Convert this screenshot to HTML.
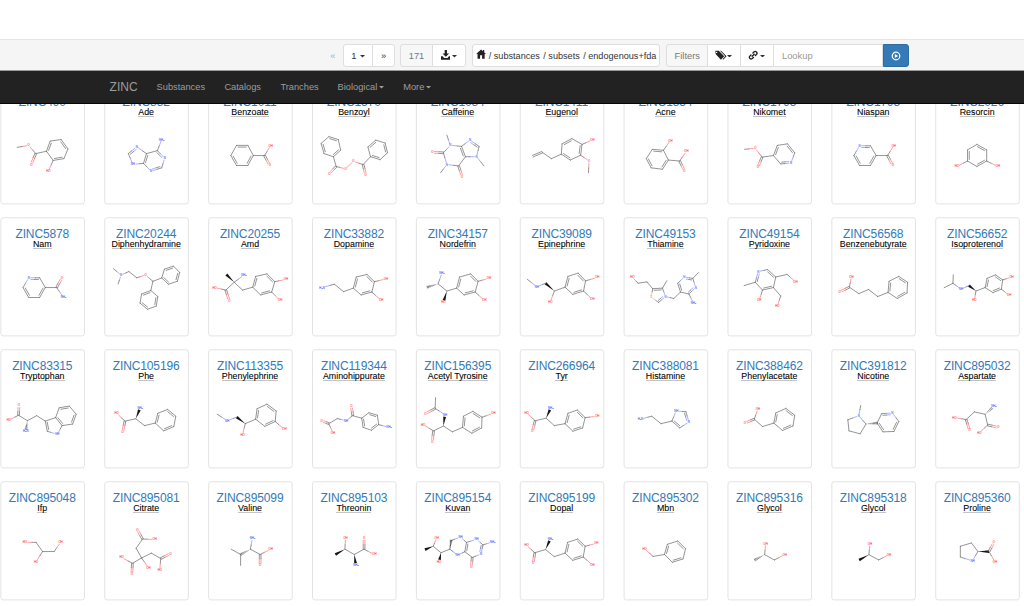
<!DOCTYPE html>
<html lang="en"><head><meta charset="utf-8"><title>ZINC</title>
<style>
*{box-sizing:border-box}
html,body{margin:0;padding:0}
body{width:1024px;height:606px;overflow:hidden;background:#fff;font-family:"Liberation Sans",sans-serif;font-size:9.33px;color:#333;position:relative}
a{color:#337ab7;text-decoration:none}
#toolbar{position:absolute;left:0;top:39px;width:1024px;height:31px;background:#f5f5f5;border-top:1px solid #e4e4e4;z-index:5}
.btn{position:absolute;top:4px;height:23px;background:#fff;border:1px solid #dedede;color:#333;font-size:9.33px;line-height:23.2px;text-align:center;white-space:nowrap;padding:0}
.btn.l{border-radius:3px 0 0 3px}
.btn.r{border-radius:0 3px 3px 0}
.btn.lr{border-radius:3px}
.btn.dis{background:#f7f7f7;color:#777}
.caret{display:inline-block;width:5px;height:2.6px;vertical-align:middle;margin-left:1.2px;position:relative;top:-0.3px}
.btn svg{position:absolute}
.btn svg.caret{position:relative}
.btn i{font-style:normal;margin-left:0.8px}
#prev{position:absolute;left:330.2px;top:5.4px;height:22.4px;line-height:22.4px;color:#8db6dc;font-size:9.33px}
#lookup{position:absolute;left:773.2px;top:4px;width:110.3px;height:23px;border:1px solid #dedede;background:#fff;color:#999;font-size:9.33px;line-height:23.2px;padding-left:7.8px;text-align:left}
#go{position:absolute;left:883px;top:4px;width:26px;height:23px;background:#337ab7;border:1px solid #2e6da4;border-radius:0 3px 3px 0}
#navbar{position:absolute;left:0;top:70px;width:1024px;height:34px;background:#222;border-top:1px solid #9a9a9a;border-bottom:1px solid #080808;z-index:4}
#navbar a{position:absolute;color:#9d9d9d;top:0;height:33px;line-height:33.4px;font-size:9.27px;white-space:nowrap}
#navbar a.brand{font-size:12px;left:109.6px;line-height:33.8px}
#navbar .caret{margin-left:1.4px;top:0.2px}
.tile{position:absolute;width:87px;height:122px}
.tile h4{margin:0;position:absolute;font-size:12px;letter-spacing:-0.12px;font-weight:normal;line-height:14px;height:14px;text-align:center;white-space:nowrap}
.tile h4 a{color:#337ab7}
.tile .nm{position:absolute;font-size:8.86px;line-height:9px;height:10px;color:#000;-webkit-text-stroke:0.08px #000;white-space:nowrap;text-align:center}
.tile .nm abbr{display:inline-block;height:8.6px;line-height:9px;border-bottom:1px solid #c4c4c4;text-decoration:none}
.tile svg{position:absolute;left:0;top:0}
</style></head>
<body>
<div id="toolbar">
<span id="prev">&laquo;</span>
<div class="btn l" style="left:343.4px;width:29.6px">1 <svg class="caret" viewBox="0 0 8 4"><path fill="currentColor" d="M0 0h8L4 4z"/></svg></div>
<div class="btn r" style="left:372px;width:23.2px">&raquo;</div>
<div class="btn l dis" style="left:400px;width:33px">171</div>
<div class="btn r" style="left:432.1px;width:33.5px"><svg style="left:7.5px;top:4.9px" width="9.6" height="9.8" viewBox="0 0 16 16"><path fill="#222" d="M6.1 0h3.8v5.6h3.6L8 11 2.5 5.6h3.6z"/><path fill="#222" d="M0 10.2h2.8l2.4 3h5.6l2.4-3H16V16H0z"/></svg><svg class="caret" style="position:absolute;left:18.8px;top:10.2px;margin:0" viewBox="0 0 8 4"><path fill="currentColor" d="M0 0h8L4 4z"/></svg></div>
<div class="btn lr" style="left:472.3px;width:187.4px;text-align:left"><svg style="left:3.2px;top:4.4px" width="10.2" height="10.2" viewBox="0 0 16 16"><path fill="#222" d="M8 0.6 0.2 8h2.2v7.2h4V10h3.2v5.2h4V8h2.2L13 5.4V1.6h-2v2z"/></svg><span style="position:absolute;left:15.4px;top:0;font-size:9.15px">/ substances <i>/ subsets</i> <i>/ endogenous+fda</i></span></div>
<div class="btn l dis" style="left:666.4px;width:41.8px">Filters</div>
<div class="btn" style="left:707.2px;width:34px"><svg style="left:6.4px;top:5px" width="12.6" height="10.2" viewBox="0 0 20 16"><path fill="#222" d="M0.6 1.2 1 6.2 9.4 15.2 14.6 10 6 1.2zM2.6 2.6a1.1 1.1 0 1 1 0 2.2 1.1 1.1 0 0 1 0-2.2z" fill-rule="evenodd"/><path fill="#222" d="M8 1.2h1.6L18.4 10 13 15.2l-.9-.9L16.2 10z"/></svg><svg class="caret" style="position:absolute;left:18.9px;top:9.9px;margin:0" viewBox="0 0 8 4"><path fill="currentColor" d="M0 0h8L4 4z"/></svg></div>
<div class="btn" style="left:740.2px;width:34.2px"><svg style="left:7.2px;top:5.4px" width="10.4" height="10.4" viewBox="0 0 16 16"><g fill="none" stroke="#222" stroke-width="2.1" stroke-linecap="round"><path d="M6.4 9.6 9.6 6.4"/><path d="M7.6 4.6 9.4 2.8a2.7 2.7 0 0 1 3.8 3.8L11.4 8.4"/><path d="M8.4 11.4 6.6 13.2a2.7 2.7 0 0 1-3.8-3.8L4.6 7.6"/></g></svg><svg class="caret" style="position:absolute;left:18.9px;top:9.9px;margin:0" viewBox="0 0 8 4"><path fill="currentColor" d="M0 0h8L4 4z"/></svg></div>
<div id="lookup">Lookup</div>
<div id="go"><svg style="position:absolute;left:6.8px;top:5.6px" width="10" height="10" viewBox="0 0 20 20"><circle cx="10" cy="10" r="7.6" fill="none" stroke="#fff" stroke-width="2.4"/><path fill="#fff" d="M7.6 5.8 14.2 10 7.6 14.2z"/></svg></div>
</div>
<div id="navbar">
<a class="brand">ZINC</a>
<a style="left:156.6px">Substances</a>
<a style="left:224.4px">Catalogs</a>
<a style="left:280.4px">Tranches</a>
<a style="left:337.6px">Biological<svg class="caret" viewBox="0 0 8 4"><path fill="currentColor" d="M0 0h8L4 4z"/></svg></a>
<a style="left:403.2px">More<svg class="caret" viewBox="0 0 8 4"><path fill="currentColor" d="M0 0h8L4 4z"/></svg></a>
</div>
<div id="grid">
<div class="tile" style="left:-1px;top:84px"><svg width="87" height="122" viewBox="0 0 870 1220"><rect x="18.9" y="17.6" width="835.8" height="1181.5" rx="24" fill="#fff" stroke="#e3e3e3" stroke-width="10.0"/><g fill="none" stroke-width="7.5" stroke-linecap="round"><path d="M512.0 570.9 L621.3 555.3" stroke="#727272"/><path d="M621.3 555.3 L689.7 649.1" stroke="#727272"/><path d="M617.2 578.5 L666.4 646.0" stroke="#727272"/><path d="M689.7 649.1 L648.7 746.7" stroke="#727272"/><path d="M648.7 746.7 L541.2 764.3" stroke="#727272"/><path d="M630.9 732.4 L553.5 745.1" stroke="#727272"/><path d="M541.2 764.3 L474.8 672.5" stroke="#727272"/><path d="M474.8 672.5 L512.0 570.9" stroke="#727272"/><path d="M496.0 664.1 L522.7 591.0" stroke="#727272"/><path d="M474.8 672.5 L367.4 695.9" stroke="#727272"/><path d="M367.4 695.9 L339.2 663.0" stroke="#727272"/><path d="M339.2 663.0 L310.9 630.0" stroke="#ff7c7c"/><path d="M276.1 617.5 L229.0 625.5" stroke="#ff7c7c"/><path d="M229.0 625.5 L181.9 633.4" stroke="#727272"/><path d="M359.6 692.7 L341.1 737.6" stroke="#727272"/><path d="M341.1 737.6 L322.7 782.5" stroke="#ff7c7c"/><path d="M375.3 699.2 L356.8 744.1" stroke="#727272"/><path d="M356.8 744.1 L338.4 789.0" stroke="#ff7c7c"/><path d="M541.2 764.3 L522.2 808.8" stroke="#727272"/><path d="M522.2 808.8 L503.1 853.4" stroke="#ff7c7c"/></g><g font-family="Liberation Sans,sans-serif" font-size="28" text-anchor="middle" stroke-width="0.9" paint-order="stroke"><text x="297.1" y="624.0" fill="#ff4c4c" stroke="#ff4c4c">O</text><text x="322.5" y="815.4" fill="#ff4c4c" stroke="#ff4c4c">O</text><text x="494.4" y="883.8" fill="#ff4c4c" stroke="#ff4c4c">HO</text></g></svg><h4 style="left:-10.51px;width:107.58px;top:10.66px"><a>ZINC490</a></h4><div class="nm" style="left:-10.51px;width:107.58px;top:24.16px"></div></div>
<div class="tile" style="left:103px;top:84px"><svg width="87" height="122" viewBox="0 0 870 1220"><rect x="17.6" y="17.6" width="835.8" height="1181.5" rx="24" fill="#fff" stroke="#e3e3e3" stroke-width="10.0"/><g fill="none" stroke-width="7.5" stroke-linecap="round"><path d="M544.2 666.6 L573.0 696.2" stroke="#727272"/><path d="M573.0 696.2 L601.7 725.7" stroke="#8b95ff"/><path d="M540.1 686.8 L564.8 712.1" stroke="#727272"/><path d="M564.8 712.1 L589.5 737.5" stroke="#8b95ff"/><path d="M610.4 761.1 L598.8 799.8" stroke="#8b95ff"/><path d="M598.8 799.8 L587.2 838.5" stroke="#727272"/><path d="M587.2 838.5 L543.7 852.0" stroke="#727272"/><path d="M543.7 852.0 L500.1 865.4" stroke="#8b95ff"/><path d="M570.0 826.0 L532.6 837.6" stroke="#727272"/><path d="M532.6 837.6 L495.1 849.2" stroke="#8b95ff"/><path d="M465.2 856.3 L435.4 825.0" stroke="#8b95ff"/><path d="M435.4 825.0 L405.5 793.6" stroke="#727272"/><path d="M405.5 793.6 L434.8 695.9" stroke="#727272"/><path d="M425.9 784.8 L447.0 714.5" stroke="#727272"/><path d="M434.8 695.9 L544.2 666.6" stroke="#727272"/><path d="M434.8 695.9 L394.7 667.9" stroke="#727272"/><path d="M394.7 667.9 L354.6 639.8" stroke="#8b95ff"/><path d="M320.7 641.0 L287.0 668.5" stroke="#8b95ff"/><path d="M287.0 668.5 L253.2 695.9" stroke="#727272"/><path d="M331.4 654.2 L302.4 677.8" stroke="#8b95ff"/><path d="M302.4 677.8 L273.4 701.4" stroke="#727272"/><path d="M253.2 695.9 L271.4 739.5" stroke="#727272"/><path d="M271.4 739.5 L289.6 783.0" stroke="#8b95ff"/><path d="M329.6 800.5 L367.5 797.0" stroke="#8b95ff"/><path d="M367.5 797.0 L405.5 793.6" stroke="#727272"/><path d="M544.2 666.6 L561.7 621.3" stroke="#727272"/><path d="M561.7 621.3 L579.2 575.9" stroke="#8b95ff"/></g><g font-family="Liberation Sans,sans-serif" font-size="28" text-anchor="middle" stroke-width="0.9" paint-order="stroke"><text x="616.5" y="750.9" fill="#5b66ff" stroke="#5b66ff">N</text><text x="479.8" y="881.8" fill="#5b66ff" stroke="#5b66ff">N</text><text x="337.2" y="637.7" fill="#5b66ff" stroke="#5b66ff">N</text><text x="298.1" y="813.4" fill="#5b66ff" stroke="#5b66ff">NH</text><text x="587.2" y="565.4" fill="#5b66ff" stroke="#5b66ff">NH<tspan font-size="24">2</tspan></text></g></svg><h4 style="left:-10.64px;width:107.58px;top:10.66px"><a>ZINC882</a></h4><div class="nm" style="left:-10.64px;width:107.58px;top:24.16px"><abbr>Ade</abbr></div></div>
<div class="tile" style="left:207px;top:84px"><svg width="87" height="122" viewBox="0 0 870 1220"><rect x="16.3" y="17.6" width="835.8" height="1181.5" rx="24" fill="#fff" stroke="#e3e3e3" stroke-width="10.0"/><g fill="none" stroke-width="7.5" stroke-linecap="round"><path d="M295.2 613.9 L408.5 613.9" stroke="#727272"/><path d="M311.1 630.9 L392.7 630.9" stroke="#727272"/><path d="M408.5 613.9 L463.2 715.5" stroke="#727272"/><path d="M463.2 715.5 L408.5 815.1" stroke="#727272"/><path d="M440.6 721.2 L401.3 793.0" stroke="#727272"/><path d="M408.5 815.1 L295.2 815.1" stroke="#727272"/><path d="M295.2 815.1 L238.6 715.5" stroke="#727272"/><path d="M302.1 792.7 L261.3 721.0" stroke="#727272"/><path d="M238.6 715.5 L295.2 613.9" stroke="#727272"/><path d="M463.2 715.5 L574.5 715.5" stroke="#727272"/><path d="M574.5 715.5 L599.6 676.3" stroke="#727272"/><path d="M599.6 676.3 L624.6 637.2" stroke="#ff7c7c"/><path d="M567.1 719.5 L588.4 759.0" stroke="#727272"/><path d="M588.4 759.0 L609.7 798.6" stroke="#ff7c7c"/><path d="M582.0 711.4 L603.4 751.0" stroke="#727272"/><path d="M603.4 751.0 L624.7 790.5" stroke="#ff7c7c"/></g><g font-family="Liberation Sans,sans-serif" font-size="28" text-anchor="middle" stroke-width="0.9" paint-order="stroke"><text x="637.0" y="627.9" fill="#ff4c4c" stroke="#ff4c4c">OH</text><text x="627.3" y="823.2" fill="#ff4c4c" stroke="#ff4c4c">O</text></g></svg><h4 style="left:-10.77px;width:107.58px;top:10.66px"><a>ZINC1011</a></h4><div class="nm" style="left:-10.77px;width:107.58px;top:24.16px"><abbr>Benzoate</abbr></div></div>
<div class="tile" style="left:311px;top:84px"><svg width="87" height="122" viewBox="0 0 870 1220"><rect x="15.0" y="17.6" width="835.8" height="1181.5" rx="24" fill="#fff" stroke="#e3e3e3" stroke-width="10.0"/><g fill="none" stroke-width="7.5" stroke-linecap="round"><path d="M179.1 526.0 L272.8 555.3" stroke="#727272"/><path d="M187.1 546.3 L254.6 567.4" stroke="#727272"/><path d="M272.8 555.3 L296.2 662.7" stroke="#727272"/><path d="M296.2 662.7 L224.0 727.2" stroke="#727272"/><path d="M274.8 659.1 L222.8 705.5" stroke="#727272"/><path d="M224.0 727.2 L130.2 695.9" stroke="#727272"/><path d="M130.2 695.9 L100.9 594.4" stroke="#727272"/><path d="M142.5 677.0 L121.4 603.9" stroke="#727272"/><path d="M100.9 594.4 L179.1 526.0" stroke="#727272"/><path d="M595.1 727.2 L569.7 629.5" stroke="#727272"/><path d="M569.7 629.5 L647.8 561.2" stroke="#727272"/><path d="M591.8 632.8 L648.1 583.5" stroke="#727272"/><path d="M647.8 561.2 L741.6 590.5" stroke="#727272"/><path d="M741.6 590.5 L765.0 688.1" stroke="#727272"/><path d="M728.3 608.1 L745.2 678.4" stroke="#727272"/><path d="M765.0 688.1 L690.8 756.5" stroke="#727272"/><path d="M690.8 756.5 L595.1 727.2" stroke="#727272"/><path d="M682.4 736.1 L613.5 715.0" stroke="#727272"/><path d="M224.0 727.2 L251.3 824.8" stroke="#727272"/><path d="M245.2 819.0 L218.3 847.4" stroke="#727272"/><path d="M218.3 847.4 L191.4 875.9" stroke="#ff7c7c"/><path d="M257.5 830.7 L230.6 859.1" stroke="#727272"/><path d="M230.6 859.1 L203.7 887.5" stroke="#ff7c7c"/><path d="M251.3 824.8 L287.9 834.0" stroke="#727272"/><path d="M287.9 834.0 L324.4 843.1" stroke="#ff7c7c"/><path d="M360.5 833.7 L407.8 788.7" stroke="#ff7c7c"/><path d="M443.5 780.6 L482.2 792.9" stroke="#ff7c7c"/><path d="M482.2 792.9 L520.9 805.3" stroke="#727272"/><path d="M512.6 807.4 L522.8 847.9" stroke="#727272"/><path d="M522.8 847.9 L532.9 888.5" stroke="#ff7c7c"/><path d="M529.1 803.3 L539.2 843.8" stroke="#727272"/><path d="M539.2 843.8 L549.4 884.3" stroke="#ff7c7c"/><path d="M520.9 805.3 L595.1 727.2" stroke="#727272"/></g><g font-family="Liberation Sans,sans-serif" font-size="28" text-anchor="middle" stroke-width="0.9" paint-order="stroke"><text x="183.0" y="907.2" fill="#ff4c4c" stroke="#ff4c4c">O</text><text x="345.1" y="858.4" fill="#ff4c4c" stroke="#ff4c4c">O</text><text x="423.2" y="784.1" fill="#ff4c4c" stroke="#ff4c4c">O</text><text x="546.2" y="917.0" fill="#ff4c4c" stroke="#ff4c4c">O</text></g></svg><h4 style="left:-10.90px;width:107.58px;top:10.66px"><a>ZINC1570</a></h4><div class="nm" style="left:-10.90px;width:107.58px;top:24.16px"><abbr>Benzoyl</abbr></div></div>
<div class="tile" style="left:415px;top:84px"><svg width="87" height="122" viewBox="0 0 870 1220"><rect x="13.7" y="17.6" width="835.8" height="1181.5" rx="24" fill="#fff" stroke="#e3e3e3" stroke-width="10.0"/><g fill="none" stroke-width="7.5" stroke-linecap="round"><path d="M339.3 629.3 L311.5 658.7" stroke="#8b95ff"/><path d="M311.5 658.7 L283.6 688.1" stroke="#727272"/><path d="M283.6 688.1 L298.1 736.6" stroke="#727272"/><path d="M298.1 736.6 L312.7 785.1" stroke="#8b95ff"/><path d="M340.0 807.8 L387.9 813.4" stroke="#8b95ff"/><path d="M387.9 813.4 L435.9 819.0" stroke="#727272"/><path d="M435.9 819.0 L504.3 727.2" stroke="#727272"/><path d="M504.3 727.2 L465.2 623.7" stroke="#727272"/><path d="M482.9 718.7 L454.8 644.2" stroke="#727272"/><path d="M465.2 623.7 L420.2 619.7" stroke="#727272"/><path d="M420.2 619.7 L375.2 615.8" stroke="#8b95ff"/><path d="M465.2 623.7 L498.7 598.8" stroke="#727272"/><path d="M498.7 598.8 L532.2 573.9" stroke="#8b95ff"/><path d="M566.8 573.1 L603.9 598.4" stroke="#8b95ff"/><path d="M603.9 598.4 L641.0 623.7" stroke="#727272"/><path d="M557.2 587.2 L589.1 608.9" stroke="#8b95ff"/><path d="M589.1 608.9 L621.1 630.6" stroke="#727272"/><path d="M641.0 623.7 L630.8 665.2" stroke="#727272"/><path d="M630.8 665.2 L620.7 706.7" stroke="#8b95ff"/><path d="M594.3 727.2 L549.3 727.2" stroke="#8b95ff"/><path d="M549.3 727.2 L504.3 727.2" stroke="#727272"/><path d="M347.0 594.0 L332.9 553.2" stroke="#8b95ff"/><path d="M332.9 553.2 L318.8 512.3" stroke="#727272"/><path d="M284.0 679.6 L239.0 677.3" stroke="#727272"/><path d="M239.0 677.3 L194.0 674.9" stroke="#ff7c7c"/><path d="M283.1 696.6 L238.1 694.2" stroke="#727272"/><path d="M238.1 694.2 L193.1 691.9" stroke="#ff7c7c"/><path d="M305.9 822.2 L281.1 854.8" stroke="#8b95ff"/><path d="M281.1 854.8 L256.2 887.3" stroke="#727272"/><path d="M427.9 821.6 L442.2 865.3" stroke="#727272"/><path d="M442.2 865.3 L456.5 909.0" stroke="#ff7c7c"/><path d="M444.0 816.3 L458.3 860.0" stroke="#727272"/><path d="M458.3 860.0 L472.6 903.7" stroke="#ff7c7c"/><path d="M628.9 743.7 L659.4 781.3" stroke="#8b95ff"/><path d="M659.4 781.3 L689.8 819.0" stroke="#727272"/></g><g font-family="Liberation Sans,sans-serif" font-size="28" text-anchor="middle" stroke-width="0.9" paint-order="stroke"><text x="353.9" y="624.0" fill="#5b66ff" stroke="#5b66ff">N</text><text x="318.8" y="815.4" fill="#5b66ff" stroke="#5b66ff">N</text><text x="549.2" y="571.3" fill="#5b66ff" stroke="#5b66ff">N</text><text x="615.6" y="737.3" fill="#5b66ff" stroke="#5b66ff">N</text><text x="172.3" y="692.3" fill="#ff4c4c" stroke="#ff4c4c">O</text><text x="471.1" y="936.5" fill="#ff4c4c" stroke="#ff4c4c">O</text></g></svg><h4 style="left:-11.03px;width:107.58px;top:10.66px"><a>ZINC1084</a></h4><div class="nm" style="left:-11.03px;width:107.58px;top:24.16px"><abbr>Caffeine</abbr></div></div>
<div class="tile" style="left:519px;top:84px"><svg width="87" height="122" viewBox="0 0 870 1220"><rect x="12.4" y="17.6" width="835.8" height="1181.5" rx="24" fill="#fff" stroke="#e3e3e3" stroke-width="10.0"/><g fill="none" stroke-width="7.5" stroke-linecap="round"><path d="M431.1 598.3 L528.8 545.5" stroke="#727272"/><path d="M452.8 605.9 L523.2 567.9" stroke="#727272"/><path d="M528.8 545.5 L630.3 604.1" stroke="#727272"/><path d="M630.3 604.1 L616.6 711.6" stroke="#727272"/><path d="M611.5 617.0 L601.7 694.4" stroke="#727272"/><path d="M616.6 711.6 L513.1 760.4" stroke="#727272"/><path d="M513.1 760.4 L423.3 701.8" stroke="#727272"/><path d="M509.8 737.9 L445.1 695.8" stroke="#727272"/><path d="M423.3 701.8 L431.1 598.3" stroke="#727272"/><path d="M630.3 604.1 L668.8 587.4" stroke="#727272"/><path d="M668.8 587.4 L707.3 570.7" stroke="#ff7c7c"/><path d="M616.6 711.6 L649.9 734.8" stroke="#727272"/><path d="M649.9 734.8 L683.2 758.0" stroke="#ff7c7c"/><path d="M699.6 791.2 L697.2 839.3" stroke="#ff7c7c"/><path d="M697.2 839.3 L694.8 887.3" stroke="#727272"/><path d="M423.3 701.8 L323.7 746.7" stroke="#727272"/><path d="M323.7 746.7 L231.9 682.3" stroke="#727272"/><path d="M228.6 674.4 L134.9 713.5" stroke="#727272"/><path d="M235.1 690.1 L141.4 729.2" stroke="#727272"/></g><g font-family="Liberation Sans,sans-serif" font-size="28" text-anchor="middle" stroke-width="0.9" paint-order="stroke"><text x="733.8" y="569.3" fill="#ff4c4c" stroke="#ff4c4c">OH</text><text x="700.6" y="780.2" fill="#ff4c4c" stroke="#ff4c4c">O</text></g></svg><h4 style="left:-11.16px;width:107.58px;top:10.66px"><a>ZINC1411</a></h4><div class="nm" style="left:-11.16px;width:107.58px;top:24.16px"><abbr>Eugenol</abbr></div></div>
<div class="tile" style="left:623px;top:84px"><svg width="87" height="122" viewBox="0 0 870 1220"><rect x="11.1" y="17.6" width="835.8" height="1181.5" rx="24" fill="#fff" stroke="#e3e3e3" stroke-width="10.0"/><g fill="none" stroke-width="7.5" stroke-linecap="round"><path d="M293.4 653.0 L404.8 662.7" stroke="#727272"/><path d="M307.5 671.3 L387.7 678.3" stroke="#727272"/><path d="M404.8 662.7 L453.6 760.4" stroke="#727272"/><path d="M453.6 760.4 L395.0 852.2" stroke="#727272"/><path d="M431.1 764.1 L388.9 830.2" stroke="#727272"/><path d="M395.0 852.2 L281.7 838.5" stroke="#727272"/><path d="M281.7 838.5 L232.9 746.7" stroke="#727272"/><path d="M289.9 817.7 L254.7 751.6" stroke="#727272"/><path d="M232.9 746.7 L293.4 653.0" stroke="#727272"/><path d="M404.8 662.7 L432.3 623.5" stroke="#727272"/><path d="M432.3 623.5 L459.7 584.2" stroke="#ff7c7c"/><path d="M453.6 760.4 L566.9 770.2" stroke="#727272"/><path d="M566.9 770.2 L593.5 730.9" stroke="#727272"/><path d="M593.5 730.9 L620.2 691.7" stroke="#ff7c7c"/><path d="M559.2 773.8 L578.1 813.1" stroke="#727272"/><path d="M578.1 813.1 L596.9 852.4" stroke="#ff7c7c"/><path d="M574.5 766.5 L593.4 805.8" stroke="#727272"/><path d="M593.4 805.8 L612.3 845.1" stroke="#ff7c7c"/></g><g font-family="Liberation Sans,sans-serif" font-size="28" text-anchor="middle" stroke-width="0.9" paint-order="stroke"><text x="473.1" y="575.2" fill="#ff4c4c" stroke="#ff4c4c">OH</text><text x="633.3" y="682.6" fill="#ff4c4c" stroke="#ff4c4c">OH</text><text x="613.8" y="877.9" fill="#ff4c4c" stroke="#ff4c4c">O</text></g></svg><h4 style="left:-11.29px;width:107.58px;top:10.66px"><a>ZINC1554</a></h4><div class="nm" style="left:-11.29px;width:107.58px;top:24.16px"><abbr>Acne</abbr></div></div>
<div class="tile" style="left:726px;top:84px"><svg width="87" height="122" viewBox="0 0 870 1220"><rect x="19.8" y="17.6" width="835.8" height="1181.5" rx="24" fill="#fff" stroke="#e3e3e3" stroke-width="10.0"/><g fill="none" stroke-width="7.5" stroke-linecap="round"><path d="M513.4 613.9 L615.0 598.3" stroke="#727272"/><path d="M615.0 598.3 L687.3 688.1" stroke="#727272"/><path d="M611.9 621.5 L663.9 686.2" stroke="#727272"/><path d="M687.3 688.1 L672.3 729.0" stroke="#727272"/><path d="M672.3 729.0 L657.4 769.9" stroke="#8b95ff"/><path d="M628.9 791.7 L587.8 795.6" stroke="#8b95ff"/><path d="M587.8 795.6 L546.6 799.5" stroke="#727272"/><path d="M627.3 774.8 L591.9 778.1" stroke="#8b95ff"/><path d="M591.9 778.1 L556.6 781.4" stroke="#727272"/><path d="M546.6 799.5 L474.4 715.5" stroke="#727272"/><path d="M474.4 715.5 L513.4 613.9" stroke="#727272"/><path d="M495.7 707.4 L523.8 634.2" stroke="#727272"/><path d="M474.4 715.5 L361.1 731.1" stroke="#727272"/><path d="M361.1 731.1 L333.4 695.5" stroke="#727272"/><path d="M333.4 695.5 L305.7 659.9" stroke="#ff7c7c"/><path d="M271.5 645.1 L228.4 649.1" stroke="#ff7c7c"/><path d="M228.4 649.1 L185.3 653.0" stroke="#727272"/><path d="M353.2 727.8 L335.8 769.8" stroke="#727272"/><path d="M335.8 769.8 L318.4 811.8" stroke="#ff7c7c"/><path d="M368.9 734.4 L351.5 776.4" stroke="#727272"/><path d="M351.5 776.4 L334.1 818.4" stroke="#ff7c7c"/></g><g font-family="Liberation Sans,sans-serif" font-size="28" text-anchor="middle" stroke-width="0.9" paint-order="stroke"><text x="650.2" y="799.8" fill="#5b66ff" stroke="#5b66ff">N</text><text x="292.7" y="653.3" fill="#ff4c4c" stroke="#ff4c4c">O</text><text x="318.1" y="844.7" fill="#ff4c4c" stroke="#ff4c4c">O</text></g></svg><h4 style="left:-10.42px;width:107.58px;top:10.66px"><a>ZINC1795</a></h4><div class="nm" style="left:-10.42px;width:107.58px;top:24.16px"><abbr>Nikomet</abbr></div></div>
<div class="tile" style="left:830px;top:84px"><svg width="87" height="122" viewBox="0 0 870 1220"><rect x="18.5" y="17.6" width="835.8" height="1181.5" rx="24" fill="#fff" stroke="#e3e3e3" stroke-width="10.0"/><g fill="none" stroke-width="7.5" stroke-linecap="round"><path d="M316.8 617.8 L360.8 617.8" stroke="#8b95ff"/><path d="M360.8 617.8 L404.8 617.8" stroke="#727272"/><path d="M316.8 634.8 L354.7 634.8" stroke="#8b95ff"/><path d="M354.7 634.8 L392.5 634.8" stroke="#727272"/><path d="M404.8 617.8 L461.5 715.5" stroke="#727272"/><path d="M461.5 715.5 L404.8 815.1" stroke="#727272"/><path d="M438.8 721.0 L398.0 792.7" stroke="#727272"/><path d="M404.8 815.1 L295.5 815.1" stroke="#727272"/><path d="M295.5 815.1 L238.8 715.5" stroke="#727272"/><path d="M302.3 792.7 L261.5 721.0" stroke="#727272"/><path d="M238.8 715.5 L261.8 675.8" stroke="#727272"/><path d="M261.8 675.8 L284.9 636.1" stroke="#8b95ff"/><path d="M461.5 715.5 L574.8 715.5" stroke="#727272"/><path d="M574.8 715.5 L599.8 676.3" stroke="#727272"/><path d="M599.8 676.3 L624.9 637.2" stroke="#ff7c7c"/><path d="M567.3 719.5 L588.6 759.0" stroke="#727272"/><path d="M588.6 759.0 L610.0 798.6" stroke="#ff7c7c"/><path d="M582.2 711.4 L603.6 751.0" stroke="#727272"/><path d="M603.6 751.0 L624.9 790.5" stroke="#ff7c7c"/></g><g font-family="Liberation Sans,sans-serif" font-size="28" text-anchor="middle" stroke-width="0.9" paint-order="stroke"><text x="295.5" y="627.9" fill="#5b66ff" stroke="#5b66ff">N</text><text x="637.3" y="627.9" fill="#ff4c4c" stroke="#ff4c4c">OH</text><text x="627.5" y="823.2" fill="#ff4c4c" stroke="#ff4c4c">O</text></g></svg><h4 style="left:-10.55px;width:107.58px;top:10.66px"><a>ZINC1795</a></h4><div class="nm" style="left:-10.55px;width:107.58px;top:24.16px"><abbr>Niaspan</abbr></div></div>
<div class="tile" style="left:934px;top:84px"><svg width="87" height="122" viewBox="0 0 870 1220"><rect x="17.2" y="17.6" width="835.8" height="1181.5" rx="24" fill="#fff" stroke="#e3e3e3" stroke-width="10.0"/><g fill="none" stroke-width="7.5" stroke-linecap="round"><path d="M429.3 604.1 L527.0 658.8" stroke="#727272"/><path d="M434.7 626.6 L505.0 666.0" stroke="#727272"/><path d="M527.0 658.8 L527.0 770.2" stroke="#727272"/><path d="M527.0 770.2 L429.3 824.8" stroke="#727272"/><path d="M505.0 763.0 L434.7 802.4" stroke="#727272"/><path d="M429.3 824.8 L335.5 770.2" stroke="#727272"/><path d="M335.5 770.2 L335.5 658.8" stroke="#727272"/><path d="M352.5 754.6 L352.5 674.4" stroke="#727272"/><path d="M335.5 658.8 L429.3 604.1" stroke="#727272"/><path d="M527.0 770.2 L569.9 791.2" stroke="#727272"/><path d="M569.9 791.2 L612.8 812.3" stroke="#ff7c7c"/><path d="M335.5 770.2 L294.4 791.1" stroke="#727272"/><path d="M294.4 791.1 L253.3 812.0" stroke="#ff7c7c"/></g><g font-family="Liberation Sans,sans-serif" font-size="28" text-anchor="middle" stroke-width="0.9" paint-order="stroke"><text x="638.3" y="834.9" fill="#ff4c4c" stroke="#ff4c4c">OH</text><text x="228.1" y="834.9" fill="#ff4c4c" stroke="#ff4c4c">HO</text></g></svg><h4 style="left:-10.68px;width:107.58px;top:10.66px"><a>ZINC2026</a></h4><div class="nm" style="left:-10.68px;width:107.58px;top:24.16px"><abbr>Resorcin</abbr></div></div>
<div class="tile" style="left:-1px;top:216px"><svg width="87" height="122" viewBox="0 0 870 1220"><rect x="18.9" y="17.6" width="835.8" height="1181.5" rx="24" fill="#fff" stroke="#e3e3e3" stroke-width="10.0"/><g fill="none" stroke-width="7.5" stroke-linecap="round"><path d="M318.5 617.8 L362.5 617.8" stroke="#8b95ff"/><path d="M362.5 617.8 L406.5 617.8" stroke="#727272"/><path d="M318.5 634.8 L356.3 634.8" stroke="#8b95ff"/><path d="M356.3 634.8 L394.2 634.8" stroke="#727272"/><path d="M406.5 617.8 L463.1 715.5" stroke="#727272"/><path d="M463.1 715.5 L406.5 815.1" stroke="#727272"/><path d="M440.4 721.0 L399.6 792.7" stroke="#727272"/><path d="M406.5 815.1 L297.1 815.1" stroke="#727272"/><path d="M297.1 815.1 L240.5 715.5" stroke="#727272"/><path d="M304.0 792.7 L263.2 721.0" stroke="#727272"/><path d="M240.5 715.5 L263.5 675.8" stroke="#727272"/><path d="M263.5 675.8 L286.5 636.1" stroke="#8b95ff"/><path d="M463.1 715.5 L576.4 715.5" stroke="#727272"/><path d="M583.9 719.5 L605.2 680.0" stroke="#727272"/><path d="M605.2 680.0 L626.6 640.5" stroke="#ff7c7c"/><path d="M568.9 711.4 L590.3 671.9" stroke="#727272"/><path d="M590.3 671.9 L611.6 632.4" stroke="#ff7c7c"/><path d="M576.4 715.5 L603.7 754.5" stroke="#727272"/><path d="M603.7 754.5 L631.0 793.4" stroke="#8b95ff"/></g><g font-family="Liberation Sans,sans-serif" font-size="28" text-anchor="middle" stroke-width="0.9" paint-order="stroke"><text x="297.1" y="627.9" fill="#5b66ff" stroke="#5b66ff">N</text><text x="629.1" y="627.9" fill="#ff4c4c" stroke="#ff4c4c">O</text><text x="644.8" y="823.2" fill="#5b66ff" stroke="#5b66ff">NH<tspan font-size="24">2</tspan></text></g></svg><h4 style="left:-10.51px;width:107.58px;top:10.66px"><a>ZINC5878</a></h4><div class="nm" style="left:-10.51px;width:107.58px;top:24.16px"><abbr>Nam</abbr></div></div>
<div class="tile" style="left:103px;top:216px"><svg width="87" height="122" viewBox="0 0 870 1220"><rect x="17.6" y="17.6" width="835.8" height="1181.5" rx="24" fill="#fff" stroke="#e3e3e3" stroke-width="10.0"/><g fill="none" stroke-width="7.5" stroke-linecap="round"><path d="M587.2 619.8 L614.5 531.9" stroke="#727272"/><path d="M614.5 531.9 L704.4 500.6" stroke="#727272"/><path d="M632.7 543.6 L697.4 521.1" stroke="#727272"/><path d="M704.4 500.6 L766.9 565.1" stroke="#727272"/><path d="M766.9 565.1 L743.4 653.0" stroke="#727272"/><path d="M747.2 573.0 L730.3 636.3" stroke="#727272"/><path d="M743.4 653.0 L653.6 682.3" stroke="#727272"/><path d="M653.6 682.3 L587.2 619.8" stroke="#727272"/><path d="M655.9 661.1 L608.1 616.1" stroke="#727272"/><path d="M477.8 744.8 L386.0 779.9" stroke="#727272"/><path d="M471.0 765.6 L404.9 790.9" stroke="#727272"/><path d="M386.0 779.9 L370.4 871.7" stroke="#727272"/><path d="M370.4 871.7 L444.6 932.3" stroke="#727272"/><path d="M391.5 867.0 L445.0 910.6" stroke="#727272"/><path d="M444.6 932.3 L532.5 901.0" stroke="#727272"/><path d="M532.5 901.0 L548.1 805.3" stroke="#727272"/><path d="M517.9 884.9 L529.2 816.0" stroke="#727272"/><path d="M548.1 805.3 L477.8 744.8" stroke="#727272"/><path d="M164.5 576.9 L133.7 551.5" stroke="#8b95ff"/><path d="M133.7 551.5 L102.8 526.0" stroke="#727272"/><path d="M174.3 610.5 L163.0 644.4" stroke="#8b95ff"/><path d="M163.0 644.4 L151.6 678.4" stroke="#727272"/><path d="M200.4 581.7 L229.7 568.5" stroke="#8b95ff"/><path d="M229.7 568.5 L259.1 555.3" stroke="#727272"/><path d="M259.1 555.3 L337.2 617.8" stroke="#727272"/><path d="M337.2 617.8 L370.9 607.3" stroke="#727272"/><path d="M370.9 607.3 L404.7 596.8" stroke="#ff7c7c"/><path d="M441.3 604.2 L470.3 628.6" stroke="#ff7c7c"/><path d="M470.3 628.6 L499.3 653.0" stroke="#727272"/><path d="M499.3 653.0 L587.2 619.8" stroke="#727272"/><path d="M499.3 653.0 L477.8 744.8" stroke="#727272"/></g><g font-family="Liberation Sans,sans-serif" font-size="28" text-anchor="middle" stroke-width="0.9" paint-order="stroke"><text x="180.9" y="600.5" fill="#5b66ff" stroke="#5b66ff">N</text><text x="425.1" y="600.5" fill="#ff4c4c" stroke="#ff4c4c">O</text></g></svg><h4 style="left:-10.64px;width:107.58px;top:10.66px"><a>ZINC20244</a></h4><div class="nm" style="left:-10.64px;width:107.58px;top:24.16px"><abbr>Diphenhydramine</abbr></div></div>
<div class="tile" style="left:207px;top:216px"><svg width="87" height="122" viewBox="0 0 870 1220"><rect x="16.3" y="17.6" width="835.8" height="1181.5" rx="24" fill="#fff" stroke="#e3e3e3" stroke-width="10.0"/><g fill="none" stroke-width="7.5" stroke-linecap="round"><path d="M486.6 604.1 L599.9 578.8" stroke="#727272"/><path d="M599.9 578.8 L678.0 656.9" stroke="#727272"/><path d="M598.8 601.7 L655.1 658.0" stroke="#727272"/><path d="M678.0 656.9 L646.8 760.4" stroke="#727272"/><path d="M646.8 760.4 L535.5 789.7" stroke="#727272"/><path d="M626.9 748.1 L546.7 769.1" stroke="#727272"/><path d="M535.5 789.7 L457.3 711.6" stroke="#727272"/><path d="M457.3 711.6 L486.6 604.1" stroke="#727272"/><path d="M477.8 701.0 L498.9 623.7" stroke="#727272"/><path d="M678.0 656.9 L718.6 648.3" stroke="#727272"/><path d="M718.6 648.3 L759.1 639.8" stroke="#ff7c7c"/><path d="M646.8 760.4 L680.0 793.6" stroke="#727272"/><path d="M680.0 793.6 L713.2 826.8" stroke="#ff7c7c"/><path d="M457.3 711.6 L355.8 740.9" stroke="#727272"/><path d="M355.8 740.9 L271.8 662.7" stroke="#727272"/><path d="M271.8 662.7 L309.2 635.1" stroke="#727272"/><path d="M309.2 635.1 L346.6 607.4" stroke="#8b95ff"/><path d="M271.8 662.7 L203.6 574.7 L183.8 594.5 Z" fill="#161616" stroke="none"/><path d="M271.8 662.7 L187.8 740.9" stroke="#727272"/><path d="M187.8 740.9 L147.1 731.6" stroke="#727272"/><path d="M147.1 731.6 L106.5 722.3" stroke="#ff7c7c"/><path d="M179.7 743.5 L194.0 787.2" stroke="#727272"/><path d="M194.0 787.2 L208.3 830.9" stroke="#ff7c7c"/><path d="M195.9 738.2 L210.2 781.9" stroke="#727272"/><path d="M210.2 781.9 L224.5 825.6" stroke="#ff7c7c"/></g><g font-family="Liberation Sans,sans-serif" font-size="28" text-anchor="middle" stroke-width="0.9" paint-order="stroke"><text x="789.4" y="643.5" fill="#ff4c4c" stroke="#ff4c4c">OH</text><text x="730.8" y="854.5" fill="#ff4c4c" stroke="#ff4c4c">OH</text><text x="369.5" y="600.5" fill="#5b66ff" stroke="#5b66ff">NH<tspan font-size="24">2</tspan></text><text x="76.5" y="725.5" fill="#ff4c4c" stroke="#ff4c4c">HO</text><text x="223.0" y="858.4" fill="#ff4c4c" stroke="#ff4c4c">O</text></g></svg><h4 style="left:-10.77px;width:107.58px;top:10.66px"><a>ZINC20255</a></h4><div class="nm" style="left:-10.77px;width:107.58px;top:24.16px"><abbr>Amd</abbr></div></div>
<div class="tile" style="left:311px;top:216px"><svg width="87" height="122" viewBox="0 0 870 1220"><rect x="15.0" y="17.6" width="835.8" height="1181.5" rx="24" fill="#fff" stroke="#e3e3e3" stroke-width="10.0"/><g fill="none" stroke-width="7.5" stroke-linecap="round"><path d="M452.5 610.0 L559.9 584.6" stroke="#727272"/><path d="M559.9 584.6 L634.1 656.9" stroke="#727272"/><path d="M558.5 606.9 L611.9 658.9" stroke="#727272"/><path d="M634.1 656.9 L608.8 760.4" stroke="#727272"/><path d="M608.8 760.4 L501.3 789.7" stroke="#727272"/><path d="M589.2 748.1 L511.9 769.2" stroke="#727272"/><path d="M501.3 789.7 L423.2 721.3" stroke="#727272"/><path d="M423.2 721.3 L452.5 610.0" stroke="#727272"/><path d="M443.7 710.1 L464.8 629.9" stroke="#727272"/><path d="M634.1 656.9 L676.8 646.7" stroke="#727272"/><path d="M676.8 646.7 L719.5 636.6" stroke="#ff7c7c"/><path d="M608.8 760.4 L646.2 793.9" stroke="#727272"/><path d="M646.2 793.9 L683.6 827.4" stroke="#ff7c7c"/><path d="M423.2 721.3 L325.5 756.5" stroke="#727272"/><path d="M325.5 756.5 L233.8 682.3" stroke="#727272"/><path d="M233.8 682.3 L189.5 694.2" stroke="#727272"/><path d="M189.5 694.2 L145.2 706.2" stroke="#8b95ff"/></g><g font-family="Liberation Sans,sans-serif" font-size="28" text-anchor="middle" stroke-width="0.9" paint-order="stroke"><text x="749.4" y="639.6" fill="#ff4c4c" stroke="#ff4c4c">OH</text><text x="702.5" y="854.5" fill="#ff4c4c" stroke="#ff4c4c">OH</text><text x="110.7" y="725.5" fill="#5b66ff" stroke="#5b66ff">H<tspan font-size="24">2</tspan>N</text></g></svg><h4 style="left:-10.90px;width:107.58px;top:10.66px"><a>ZINC33882</a></h4><div class="nm" style="left:-10.90px;width:107.58px;top:24.16px"><abbr>Dopamine</abbr></div></div>
<div class="tile" style="left:415px;top:216px"><svg width="87" height="122" viewBox="0 0 870 1220"><rect x="13.7" y="17.6" width="835.8" height="1181.5" rx="24" fill="#fff" stroke="#e3e3e3" stroke-width="10.0"/><g fill="none" stroke-width="7.5" stroke-linecap="round"><path d="M445.7 610.0 L557.0 578.8" stroke="#727272"/><path d="M557.0 578.8 L631.2 653.0" stroke="#727272"/><path d="M555.4 601.2 L608.8 654.6" stroke="#727272"/><path d="M631.2 653.0 L602.0 760.4" stroke="#727272"/><path d="M602.0 760.4 L490.6 789.7" stroke="#727272"/><path d="M582.0 748.1 L501.9 769.1" stroke="#727272"/><path d="M490.6 789.7 L416.4 721.3" stroke="#727272"/><path d="M416.4 721.3 L445.7 610.0" stroke="#727272"/><path d="M436.9 710.1 L458.0 629.9" stroke="#727272"/><path d="M631.2 653.0 L670.3 642.3" stroke="#727272"/><path d="M670.3 642.3 L709.3 631.7" stroke="#ff7c7c"/><path d="M602.0 760.4 L638.5 793.9" stroke="#727272"/><path d="M638.5 793.9 L675.1 827.3" stroke="#ff7c7c"/><path d="M416.4 721.3 L318.8 750.6" stroke="#727272"/><path d="M318.8 750.6 L276.6 839.1 L303.4 847.4 Z" fill="#161616" stroke="none"/><path d="M318.8 750.6 L230.9 678.4" stroke="#727272"/><path d="M230.9 678.4 L246.6 635.0" stroke="#727272"/><path d="M246.6 635.0 L262.4 591.6" stroke="#8b95ff"/><path d="M218.5 680.6 L219.4 683.5" stroke="#2a2a2a" stroke-width="6.2" stroke-linecap="butt"/><path d="M206.1 682.8 L207.9 688.7" stroke="#2a2a2a" stroke-width="6.2" stroke-linecap="butt"/><path d="M193.7 685.0 L196.4 693.9" stroke="#2a2a2a" stroke-width="6.2" stroke-linecap="butt"/><path d="M181.3 687.2 L185.0 699.1" stroke="#2a2a2a" stroke-width="6.2" stroke-linecap="butt"/><path d="M168.9 689.4 L173.5 704.2" stroke="#2a2a2a" stroke-width="6.2" stroke-linecap="butt"/><path d="M156.5 691.6 L162.0 709.4" stroke="#2a2a2a" stroke-width="6.2" stroke-linecap="butt"/><path d="M144.1 693.8 L150.5 714.6" stroke="#2a2a2a" stroke-width="6.2" stroke-linecap="butt"/><path d="M131.7 696.0 L139.0 719.8" stroke="#2a2a2a" stroke-width="6.2" stroke-linecap="butt"/><path d="M119.3 698.2 L127.6 724.9" stroke="#2a2a2a" stroke-width="6.2" stroke-linecap="butt"/></g><g font-family="Liberation Sans,sans-serif" font-size="28" text-anchor="middle" stroke-width="0.9" paint-order="stroke"><text x="738.7" y="633.8" fill="#ff4c4c" stroke="#ff4c4c">OH</text><text x="693.8" y="854.5" fill="#ff4c4c" stroke="#ff4c4c">OH</text><text x="283.6" y="874.0" fill="#ff4c4c" stroke="#ff4c4c">HO</text><text x="269.9" y="581.0" fill="#5b66ff" stroke="#5b66ff">NH<tspan font-size="24">2</tspan></text></g></svg><h4 style="left:-11.03px;width:107.58px;top:10.66px"><a>ZINC34157</a></h4><div class="nm" style="left:-11.03px;width:107.58px;top:24.16px"><abbr>Nordefrin</abbr></div></div>
<div class="tile" style="left:519px;top:216px"><svg width="87" height="122" viewBox="0 0 870 1220"><rect x="12.4" y="17.6" width="835.8" height="1181.5" rx="24" fill="#fff" stroke="#e3e3e3" stroke-width="10.0"/><g fill="none" stroke-width="7.5" stroke-linecap="round"><path d="M489.7 604.1 L591.2 570.9" stroke="#727272"/><path d="M591.2 570.9 L665.5 649.1" stroke="#727272"/><path d="M589.3 593.6 L642.8 649.8" stroke="#727272"/><path d="M665.5 649.1 L645.9 750.6" stroke="#727272"/><path d="M645.9 750.6 L538.5 783.8" stroke="#727272"/><path d="M625.9 739.0 L548.5 762.9" stroke="#727272"/><path d="M538.5 783.8 L460.4 711.6" stroke="#727272"/><path d="M460.4 711.6 L489.7 604.1" stroke="#727272"/><path d="M480.9 701.0 L502.0 623.7" stroke="#727272"/><path d="M665.5 649.1 L709.6 635.8" stroke="#727272"/><path d="M709.6 635.8 L753.7 622.6" stroke="#ff7c7c"/><path d="M645.9 750.6 L680.8 784.0" stroke="#727272"/><path d="M680.8 784.0 L715.7 817.3" stroke="#ff7c7c"/><path d="M460.4 711.6 L353.0 750.6" stroke="#727272"/><path d="M353.0 750.6 L337.2 794.1" stroke="#727272"/><path d="M337.2 794.1 L321.4 837.6" stroke="#ff7c7c"/><path d="M353.0 750.6 L274.4 662.0 L255.8 683.0 Z" fill="#161616" stroke="none"/><path d="M265.1 672.5 L234.7 684.6" stroke="#727272"/><path d="M234.7 684.6 L204.4 696.8" stroke="#8b95ff"/><path d="M156.8 691.5 L120.1 662.5" stroke="#8b95ff"/><path d="M120.1 662.5 L83.4 633.4" stroke="#727272"/></g><g font-family="Liberation Sans,sans-serif" font-size="28" text-anchor="middle" stroke-width="0.9" paint-order="stroke"><text x="782.7" y="624.0" fill="#ff4c4c" stroke="#ff4c4c">OH</text><text x="733.8" y="844.7" fill="#ff4c4c" stroke="#ff4c4c">OH</text><text x="313.9" y="868.1" fill="#ff4c4c" stroke="#ff4c4c">HO</text><text x="177.2" y="717.7" fill="#5b66ff" stroke="#5b66ff">NH</text></g></svg><h4 style="left:-11.16px;width:107.58px;top:10.66px"><a>ZINC39089</a></h4><div class="nm" style="left:-11.16px;width:107.58px;top:24.16px"><abbr>Epinephrine</abbr></div></div>
<div class="tile" style="left:623px;top:216px"><svg width="87" height="122" viewBox="0 0 870 1220"><rect x="11.1" y="17.6" width="835.8" height="1181.5" rx="24" fill="#fff" stroke="#e3e3e3" stroke-width="10.0"/><g fill="none" stroke-width="7.5" stroke-linecap="round"><path d="M285.5 792.4 L291.4 759.8" stroke="#ecc080"/><path d="M291.4 759.8 L297.3 727.2" stroke="#727272"/><path d="M297.3 727.2 L395.0 721.3" stroke="#727272"/><path d="M312.0 743.3 L382.3 739.1" stroke="#727272"/><path d="M395.0 721.3 L406.2 753.4" stroke="#727272"/><path d="M406.2 753.4 L417.3 785.4" stroke="#8b95ff"/><path d="M408.2 819.1 L382.1 841.5" stroke="#8b95ff"/><path d="M382.1 841.5 L355.9 863.9" stroke="#727272"/><path d="M397.1 806.2 L374.6 825.5" stroke="#8b95ff"/><path d="M374.6 825.5 L352.2 844.7" stroke="#727272"/><path d="M355.9 863.9 L327.3 844.3" stroke="#727272"/><path d="M327.3 844.3 L298.7 824.8" stroke="#ecc080"/><path d="M574.7 760.4 L547.3 672.5" stroke="#727272"/><path d="M587.1 743.0 L567.4 679.8" stroke="#727272"/><path d="M547.3 672.5 L572.8 648.5" stroke="#727272"/><path d="M572.8 648.5 L598.3 624.5" stroke="#8b95ff"/><path d="M634.8 613.4 L666.3 618.6" stroke="#8b95ff"/><path d="M666.3 618.6 L697.7 623.7" stroke="#727272"/><path d="M632.1 630.2 L659.1 634.6" stroke="#8b95ff"/><path d="M659.1 634.6 L686.2 639.0" stroke="#727272"/><path d="M697.7 623.7 L709.2 659.5" stroke="#727272"/><path d="M709.2 659.5 L720.6 695.4" stroke="#8b95ff"/><path d="M711.6 730.0 L685.1 755.0" stroke="#8b95ff"/><path d="M685.1 755.0 L658.7 779.9" stroke="#727272"/><path d="M699.9 717.7 L677.2 739.1" stroke="#8b95ff"/><path d="M677.2 739.1 L654.4 760.6" stroke="#727272"/><path d="M658.7 779.9 L574.7 760.4" stroke="#727272"/><path d="M297.3 727.2 L238.8 658.8" stroke="#727272"/><path d="M238.8 658.8 L150.9 672.5" stroke="#727272"/><path d="M150.9 672.5 L129.9 650.2" stroke="#727272"/><path d="M129.9 650.2 L109.0 627.9" stroke="#ff7c7c"/><path d="M395.0 721.3 L438.0 647.1" stroke="#727272"/><path d="M445.1 810.1 L476.7 817.5" stroke="#8b95ff"/><path d="M476.7 817.5 L508.3 824.8" stroke="#727272"/><path d="M508.3 824.8 L574.7 760.4" stroke="#727272"/><path d="M697.7 623.7 L756.3 565.1" stroke="#727272"/><path d="M658.7 779.9 L675.9 813.7" stroke="#727272"/><path d="M675.9 813.7 L693.2 847.5" stroke="#8b95ff"/></g><g font-family="Liberation Sans,sans-serif" font-size="28" text-anchor="middle" stroke-width="0.9" paint-order="stroke"><text x="281.7" y="823.2" fill="#e2a040" stroke="#e2a040">S</text><text x="424.3" y="815.4" fill="#5b66ff" stroke="#5b66ff">N</text><text x="92.3" y="620.1" fill="#ff4c4c" stroke="#ff4c4c">HO</text><text x="613.8" y="620.1" fill="#5b66ff" stroke="#5b66ff">N</text><text x="727.0" y="725.5" fill="#5b66ff" stroke="#5b66ff">N</text><text x="703.6" y="877.9" fill="#5b66ff" stroke="#5b66ff">NH<tspan font-size="24">2</tspan></text></g></svg><h4 style="left:-11.29px;width:107.58px;top:10.66px"><a>ZINC49153</a></h4><div class="nm" style="left:-11.29px;width:107.58px;top:24.16px"><abbr>Thiamine</abbr></div></div>
<div class="tile" style="left:726px;top:216px"><svg width="87" height="122" viewBox="0 0 870 1220"><rect x="19.8" y="17.6" width="835.8" height="1181.5" rx="24" fill="#fff" stroke="#e3e3e3" stroke-width="10.0"/><g fill="none" stroke-width="7.5" stroke-linecap="round"><path d="M342.9 551.0 L379.4 543.4" stroke="#8b95ff"/><path d="M379.4 543.4 L415.8 535.8" stroke="#727272"/><path d="M415.8 535.8 L497.8 610.0" stroke="#727272"/><path d="M415.9 558.8 L474.9 612.2" stroke="#727272"/><path d="M497.8 610.0 L474.4 715.5" stroke="#727272"/><path d="M474.4 715.5 L365.0 740.9" stroke="#727272"/><path d="M455.2 702.5 L376.5 720.7" stroke="#727272"/><path d="M365.0 740.9 L292.7 662.7" stroke="#727272"/><path d="M292.7 662.7 L304.6 619.2" stroke="#727272"/><path d="M304.6 619.2 L316.5 575.7" stroke="#8b95ff"/><path d="M312.5 655.0 L322.7 617.6" stroke="#727272"/><path d="M322.7 617.6 L332.9 580.1" stroke="#8b95ff"/><path d="M292.7 662.7 L181.4 695.9" stroke="#727272"/><path d="M365.0 740.9 L351.7 782.3" stroke="#727272"/><path d="M351.7 782.3 L338.4 823.8" stroke="#ff7c7c"/><path d="M474.4 715.5 L546.6 799.5" stroke="#727272"/><path d="M546.6 799.5 L533.3 840.9" stroke="#727272"/><path d="M533.3 840.9 L520.1 882.4" stroke="#ff7c7c"/><path d="M497.8 610.0 L611.1 584.6" stroke="#727272"/><path d="M611.1 584.6 L642.6 612.3" stroke="#727272"/><path d="M642.6 612.3 L674.0 640.0" stroke="#ff7c7c"/></g><g font-family="Liberation Sans,sans-serif" font-size="28" text-anchor="middle" stroke-width="0.9" paint-order="stroke"><text x="322.0" y="565.4" fill="#5b66ff" stroke="#5b66ff">N</text><text x="331.8" y="854.5" fill="#ff4c4c" stroke="#ff4c4c">OH</text><text x="513.4" y="913.0" fill="#ff4c4c" stroke="#ff4c4c">HO</text><text x="693.1" y="667.0" fill="#ff4c4c" stroke="#ff4c4c">OH</text></g></svg><h4 style="left:-10.42px;width:107.58px;top:10.66px"><a>ZINC49154</a></h4><div class="nm" style="left:-10.42px;width:107.58px;top:24.16px"><abbr>Pyridoxine</abbr></div></div>
<div class="tile" style="left:830px;top:216px"><svg width="87" height="122" viewBox="0 0 870 1220"><rect x="18.5" y="17.6" width="835.8" height="1181.5" rx="24" fill="#fff" stroke="#e3e3e3" stroke-width="10.0"/><g fill="none" stroke-width="7.5" stroke-linecap="round"><path d="M590.4 653.0 L688.0 604.1" stroke="#727272"/><path d="M688.0 604.1 L775.9 662.7" stroke="#727272"/><path d="M690.9 626.5 L754.2 668.7" stroke="#727272"/><path d="M775.9 662.7 L770.1 770.2" stroke="#727272"/><path d="M770.1 770.2 L672.4 824.8" stroke="#727272"/><path d="M748.1 763.0 L677.8 802.4" stroke="#727272"/><path d="M672.4 824.8 L580.6 764.3" stroke="#727272"/><path d="M580.6 764.3 L590.4 653.0" stroke="#727272"/><path d="M598.9 750.2 L606.0 670.0" stroke="#727272"/><path d="M580.6 764.3 L477.1 805.3" stroke="#727272"/><path d="M477.1 805.3 L385.3 735.0" stroke="#727272"/><path d="M385.3 735.0 L287.7 776.0" stroke="#727272"/><path d="M287.7 776.0 L193.9 711.6" stroke="#727272"/><path d="M193.9 711.6 L201.7 670.3" stroke="#727272"/><path d="M201.7 670.3 L209.5 629.0" stroke="#ff7c7c"/><path d="M190.1 704.0 L150.8 723.6" stroke="#727272"/><path d="M150.8 723.6 L111.5 743.3" stroke="#ff7c7c"/><path d="M197.7 719.2 L158.4 738.8" stroke="#727272"/><path d="M158.4 738.8 L119.1 758.5" stroke="#ff7c7c"/></g><g font-family="Liberation Sans,sans-serif" font-size="28" text-anchor="middle" stroke-width="0.9" paint-order="stroke"><text x="213.4" y="618.1" fill="#ff4c4c" stroke="#ff4c4c">OH</text><text x="96.2" y="770.5" fill="#ff4c4c" stroke="#ff4c4c">O</text></g></svg><h4 style="left:-10.55px;width:107.58px;top:10.66px"><a>ZINC56568</a></h4><div class="nm" style="left:-10.55px;width:107.58px;top:24.16px"><abbr>Benzenebutyrate</abbr></div></div>
<div class="tile" style="left:934px;top:216px"><svg width="87" height="122" viewBox="0 0 870 1220"><rect x="17.2" y="17.6" width="835.8" height="1181.5" rx="24" fill="#fff" stroke="#e3e3e3" stroke-width="10.0"/><g fill="none" stroke-width="7.5" stroke-linecap="round"><path d="M530.9 623.7 L614.8 588.5" stroke="#727272"/><path d="M614.8 588.5 L687.1 639.3" stroke="#727272"/><path d="M615.2 609.5 L667.2 646.1" stroke="#727272"/><path d="M687.1 639.3 L673.4 731.1" stroke="#727272"/><path d="M673.4 731.1 L589.5 766.2" stroke="#727272"/><path d="M655.1 720.3 L594.6 745.6" stroke="#727272"/><path d="M589.5 766.2 L511.3 715.5" stroke="#727272"/><path d="M511.3 715.5 L530.9 623.7" stroke="#727272"/><path d="M530.7 706.2 L544.8 640.1" stroke="#727272"/><path d="M687.1 639.3 L716.9 629.4" stroke="#727272"/><path d="M716.9 629.4 L746.6 619.5" stroke="#ff7c7c"/><path d="M673.4 731.1 L702.4 754.2" stroke="#727272"/><path d="M702.4 754.2 L731.3 777.4" stroke="#ff7c7c"/><path d="M511.3 715.5 L419.5 750.6" stroke="#727272"/><path d="M419.5 750.6 L413.5 787.0" stroke="#727272"/><path d="M413.5 787.0 L407.4 823.4" stroke="#ff7c7c"/><path d="M419.5 750.6 L357.8 684.9 L340.6 707.0 Z" fill="#161616" stroke="none"/><path d="M349.2 695.9 L323.3 707.6" stroke="#727272"/><path d="M323.3 707.6 L297.4 719.3" stroke="#8b95ff"/><path d="M249.5 715.7 L219.3 694.1" stroke="#8b95ff"/><path d="M219.3 694.1 L189.1 672.5" stroke="#727272"/><path d="M189.1 672.5 L193.0 588.5" stroke="#727272"/><path d="M189.1 672.5 L101.2 717.4" stroke="#727272"/></g><g font-family="Liberation Sans,sans-serif" font-size="28" text-anchor="middle" stroke-width="0.9" paint-order="stroke"><text x="775.0" y="620.1" fill="#ff4c4c" stroke="#ff4c4c">OH</text><text x="751.6" y="803.7" fill="#ff4c4c" stroke="#ff4c4c">OH</text><text x="403.9" y="854.5" fill="#ff4c4c" stroke="#ff4c4c">HO</text><text x="271.1" y="741.2" fill="#5b66ff" stroke="#5b66ff">NH</text></g></svg><h4 style="left:-10.68px;width:107.58px;top:10.66px"><a>ZINC56652</a></h4><div class="nm" style="left:-10.68px;width:107.58px;top:24.16px"><abbr>Isoproterenol</abbr></div></div>
<div class="tile" style="left:-1px;top:348px"><svg width="87" height="122" viewBox="0 0 870 1220"><rect x="18.9" y="17.6" width="835.8" height="1181.5" rx="24" fill="#fff" stroke="#e3e3e3" stroke-width="10.0"/><g fill="none" stroke-width="7.5" stroke-linecap="round"><path d="M601.8 598.3 L703.4 580.7" stroke="#727272"/><path d="M618.9 612.6 L692.0 599.9" stroke="#727272"/><path d="M703.4 580.7 L771.7 662.7" stroke="#727272"/><path d="M771.7 662.7 L736.6 760.4" stroke="#727272"/><path d="M750.8 670.6 L725.5 741.0" stroke="#727272"/><path d="M736.6 760.4 L631.1 776.0" stroke="#727272"/><path d="M631.1 776.0 L566.6 695.9" stroke="#727272"/><path d="M635.3 754.1 L588.9 696.5" stroke="#727272"/><path d="M566.6 695.9 L601.8 598.3" stroke="#727272"/><path d="M566.6 695.9 L463.1 731.1" stroke="#727272"/><path d="M463.1 731.1 L482.7 832.7" stroke="#727272"/><path d="M482.6 742.1 L496.6 815.2" stroke="#727272"/><path d="M482.7 832.7 L518.1 843.8" stroke="#727272"/><path d="M518.1 843.8 L553.6 854.9" stroke="#8b95ff"/><path d="M593.3 844.1 L612.2 810.1" stroke="#8b95ff"/><path d="M612.2 810.1 L631.1 776.0" stroke="#727272"/><path d="M463.1 731.1 L377.2 676.4" stroke="#727272"/><path d="M377.2 676.4 L283.4 727.2" stroke="#727272"/><path d="M279.7 739.0 L283.6 739.5" stroke="#2a2a2a" stroke-width="6.2" stroke-linecap="butt"/><path d="M275.9 750.7 L283.8 751.9" stroke="#2a2a2a" stroke-width="6.2" stroke-linecap="butt"/><path d="M272.1 762.5 L284.0 764.3" stroke="#2a2a2a" stroke-width="6.2" stroke-linecap="butt"/><path d="M268.4 774.3 L284.2 776.6" stroke="#2a2a2a" stroke-width="6.2" stroke-linecap="butt"/><path d="M264.6 786.0 L284.4 789.0" stroke="#2a2a2a" stroke-width="6.2" stroke-linecap="butt"/><path d="M260.8 797.8 L284.6 801.3" stroke="#2a2a2a" stroke-width="6.2" stroke-linecap="butt"/><path d="M257.1 809.6 L284.8 813.7" stroke="#2a2a2a" stroke-width="6.2" stroke-linecap="butt"/><path d="M283.4 727.2 L195.5 672.5" stroke="#727272"/><path d="M204.0 672.8 L205.6 634.5" stroke="#727272"/><path d="M205.6 634.5 L207.1 596.2" stroke="#ff7c7c"/><path d="M187.1 672.2 L188.6 633.9" stroke="#727272"/><path d="M188.6 633.9 L190.1 595.6" stroke="#ff7c7c"/><path d="M195.5 672.5 L159.4 690.6" stroke="#727272"/><path d="M159.4 690.6 L123.2 708.7" stroke="#ff7c7c"/></g><g font-family="Liberation Sans,sans-serif" font-size="28" text-anchor="middle" stroke-width="0.9" paint-order="stroke"><text x="582.3" y="874.0" fill="#5b66ff" stroke="#5b66ff">NH</text><text x="267.8" y="842.7" fill="#5b66ff" stroke="#5b66ff">H<tspan font-size="24">2</tspan>N</text><text x="199.5" y="584.9" fill="#ff4c4c" stroke="#ff4c4c">O</text><text x="97.9" y="731.4" fill="#ff4c4c" stroke="#ff4c4c">HO</text></g></svg><h4 style="left:-10.51px;width:107.58px;top:10.66px"><a>ZINC83315</a></h4><div class="nm" style="left:-10.51px;width:107.58px;top:24.16px"><abbr>Tryptophan</abbr></div></div>
<div class="tile" style="left:103px;top:348px"><svg width="87" height="122" viewBox="0 0 870 1220"><rect x="17.6" y="17.6" width="835.8" height="1181.5" rx="24" fill="#fff" stroke="#e3e3e3" stroke-width="10.0"/><g fill="none" stroke-width="7.5" stroke-linecap="round"><path d="M548.1 653.0 L645.8 613.9" stroke="#727272"/><path d="M645.8 613.9 L727.8 682.3" stroke="#727272"/><path d="M646.4 636.5 L705.4 685.8" stroke="#727272"/><path d="M727.8 682.3 L708.3 785.8" stroke="#727272"/><path d="M708.3 785.8 L606.7 828.8" stroke="#727272"/><path d="M687.4 776.1 L614.3 807.1" stroke="#727272"/><path d="M606.7 828.8 L522.7 750.6" stroke="#727272"/><path d="M522.7 750.6 L548.1 653.0" stroke="#727272"/><path d="M542.7 741.2 L561.0 670.9" stroke="#727272"/><path d="M522.7 750.6 L415.3 776.0" stroke="#727272"/><path d="M415.3 776.0 L327.4 707.7" stroke="#727272"/><path d="M327.4 707.7 L376.8 624.2 L350.9 613.5 Z" fill="#161616" stroke="none"/><path d="M327.4 707.7 L220.0 731.1" stroke="#727272"/><path d="M220.0 731.1 L187.2 700.6" stroke="#727272"/><path d="M187.2 700.6 L154.5 670.1" stroke="#ff7c7c"/><path d="M211.7 729.3 L202.2 772.7" stroke="#727272"/><path d="M202.2 772.7 L192.8 816.1" stroke="#ff7c7c"/><path d="M228.3 732.9 L218.8 776.3" stroke="#727272"/><path d="M218.8 776.3 L209.4 819.7" stroke="#ff7c7c"/></g><g font-family="Liberation Sans,sans-serif" font-size="28" text-anchor="middle" stroke-width="0.9" paint-order="stroke"><text x="372.3" y="608.4" fill="#5b66ff" stroke="#5b66ff">NH<tspan font-size="24">2</tspan></text><text x="136.0" y="663.0" fill="#ff4c4c" stroke="#ff4c4c">HO</text><text x="196.6" y="848.6" fill="#ff4c4c" stroke="#ff4c4c">O</text></g></svg><h4 style="left:-10.64px;width:107.58px;top:10.66px"><a>ZINC105196</a></h4><div class="nm" style="left:-10.64px;width:107.58px;top:24.16px"><abbr>Phe</abbr></div></div>
<div class="tile" style="left:207px;top:348px"><svg width="87" height="122" viewBox="0 0 870 1220"><rect x="16.3" y="17.6" width="835.8" height="1181.5" rx="24" fill="#fff" stroke="#e3e3e3" stroke-width="10.0"/><g fill="none" stroke-width="7.5" stroke-linecap="round"><path d="M500.3 608.0 L599.9 561.2" stroke="#727272"/><path d="M599.9 561.2 L691.7 629.5" stroke="#727272"/><path d="M602.6 584.4 L668.7 633.6" stroke="#727272"/><path d="M691.7 629.5 L682.0 735.0" stroke="#727272"/><path d="M682.0 735.0 L578.4 783.8" stroke="#727272"/><path d="M660.2 726.5 L585.7 761.6" stroke="#727272"/><path d="M578.4 783.8 L486.6 711.6" stroke="#727272"/><path d="M486.6 711.6 L500.3 608.0" stroke="#727272"/><path d="M505.4 699.3 L515.3 624.8" stroke="#727272"/><path d="M682.0 735.0 L718.1 765.8" stroke="#727272"/><path d="M718.1 765.8 L754.2 796.5" stroke="#ff7c7c"/><path d="M486.6 711.6 L383.1 756.5" stroke="#727272"/><path d="M383.1 756.5 L372.0 801.7" stroke="#727272"/><path d="M372.0 801.7 L360.9 847.0" stroke="#ff7c7c"/><path d="M383.1 756.5 L305.6 680.8 L288.8 703.2 Z" fill="#161616" stroke="none"/><path d="M297.2 692.0 L264.1 704.4" stroke="#727272"/><path d="M264.1 704.4 L231.1 716.8" stroke="#8b95ff"/><path d="M180.5 712.6 L141.2 687.7" stroke="#8b95ff"/><path d="M141.2 687.7 L101.9 662.7" stroke="#727272"/></g><g font-family="Liberation Sans,sans-serif" font-size="28" text-anchor="middle" stroke-width="0.9" paint-order="stroke"><text x="773.8" y="823.2" fill="#ff4c4c" stroke="#ff4c4c">OH</text><text x="355.8" y="877.9" fill="#ff4c4c" stroke="#ff4c4c">HO</text><text x="203.4" y="737.3" fill="#5b66ff" stroke="#5b66ff">NH</text></g></svg><h4 style="left:-10.77px;width:107.58px;top:10.66px"><a>ZINC113355</a></h4><div class="nm" style="left:-10.77px;width:107.58px;top:24.16px"><abbr>Phenylephrine</abbr></div></div>
<div class="tile" style="left:311px;top:348px"><svg width="87" height="122" viewBox="0 0 870 1220"><rect x="15.0" y="17.6" width="835.8" height="1181.5" rx="24" fill="#fff" stroke="#e3e3e3" stroke-width="10.0"/><g fill="none" stroke-width="7.5" stroke-linecap="round"><path d="M507.2 701.8 L579.5 647.1" stroke="#727272"/><path d="M579.5 647.1 L663.4 672.5" stroke="#727272"/><path d="M586.3 666.9 L646.8 685.2" stroke="#727272"/><path d="M663.4 672.5 L677.1 766.2" stroke="#727272"/><path d="M677.1 766.2 L604.8 822.9" stroke="#727272"/><path d="M656.5 760.8 L604.5 801.6" stroke="#727272"/><path d="M604.8 822.9 L520.9 793.6" stroke="#727272"/><path d="M520.9 793.6 L507.2 701.8" stroke="#727272"/><path d="M535.8 778.2 L525.9 712.1" stroke="#727272"/><path d="M677.1 766.2 L711.6 775.3" stroke="#727272"/><path d="M711.6 775.3 L746.0 784.4" stroke="#8b95ff"/><path d="M507.2 701.8 L417.3 676.4" stroke="#727272"/><path d="M425.8 675.2 L420.4 637.8" stroke="#727272"/><path d="M420.4 637.8 L415.1 600.4" stroke="#ff7c7c"/><path d="M408.9 677.6 L403.6 640.2" stroke="#727272"/><path d="M403.6 640.2 L398.2 602.8" stroke="#ff7c7c"/><path d="M417.3 676.4 L394.5 693.8" stroke="#727272"/><path d="M394.5 693.8 L371.7 711.3" stroke="#8b95ff"/><path d="M321.2 719.9 L292.1 712.8" stroke="#8b95ff"/><path d="M292.1 712.8 L263.0 705.7" stroke="#727272"/><path d="M263.0 705.7 L179.1 756.5" stroke="#727272"/><path d="M182.2 748.6 L155.0 737.8" stroke="#727272"/><path d="M155.0 737.8 L127.8 727.1" stroke="#ff7c7c"/><path d="M175.9 764.4 L148.7 753.7" stroke="#727272"/><path d="M148.7 753.7 L121.6 742.9" stroke="#ff7c7c"/><path d="M179.1 756.5 L194.3 792.2" stroke="#727272"/><path d="M194.3 792.2 L209.5 828.0" stroke="#ff7c7c"/></g><g font-family="Liberation Sans,sans-serif" font-size="28" text-anchor="middle" stroke-width="0.9" paint-order="stroke"><text x="780.6" y="803.7" fill="#5b66ff" stroke="#5b66ff">NH<tspan font-size="24">2</tspan></text><text x="403.7" y="590.8" fill="#ff4c4c" stroke="#ff4c4c">O</text><text x="350.9" y="737.3" fill="#5b66ff" stroke="#5b66ff">NH</text><text x="104.8" y="737.3" fill="#ff4c4c" stroke="#ff4c4c">O</text><text x="218.1" y="858.4" fill="#ff4c4c" stroke="#ff4c4c">OH</text></g></svg><h4 style="left:-10.90px;width:107.58px;top:10.66px"><a>ZINC119344</a></h4><div class="nm" style="left:-10.90px;width:107.58px;top:24.16px"><abbr>Aminohippurate</abbr></div></div>
<div class="tile" style="left:415px;top:348px"><svg width="87" height="122" viewBox="0 0 870 1220"><rect x="13.7" y="17.6" width="835.8" height="1181.5" rx="24" fill="#fff" stroke="#e3e3e3" stroke-width="10.0"/><g fill="none" stroke-width="7.5" stroke-linecap="round"><path d="M484.8 682.3 L578.5 633.4" stroke="#727272"/><path d="M578.5 633.4 L670.3 692.0" stroke="#727272"/><path d="M582.2 656.0 L648.3 698.2" stroke="#727272"/><path d="M670.3 692.0 L666.4 799.5" stroke="#727272"/><path d="M666.4 799.5 L568.8 852.2" stroke="#727272"/><path d="M644.7 791.9 L574.3 829.8" stroke="#727272"/><path d="M568.8 852.2 L475.0 793.6" stroke="#727272"/><path d="M475.0 793.6 L484.8 682.3" stroke="#727272"/><path d="M493.3 779.5 L500.3 699.3" stroke="#727272"/><path d="M670.3 692.0 L712.9 677.4" stroke="#727272"/><path d="M712.9 677.4 L755.4 662.7" stroke="#ff7c7c"/><path d="M475.0 793.6 L373.4 838.5" stroke="#727272"/><path d="M373.4 838.5 L283.6 779.9" stroke="#727272"/><path d="M283.6 779.9 L310.2 689.5 L282.5 685.7 Z" fill="#161616" stroke="none"/><path d="M276.4 652.0 L239.0 628.1" stroke="#8b95ff"/><path d="M239.0 628.1 L201.6 604.1" stroke="#727272"/><path d="M201.6 604.1 L205.5 496.7" stroke="#727272"/><path d="M197.5 596.7 L158.1 618.0" stroke="#727272"/><path d="M158.1 618.0 L118.6 639.3" stroke="#ff7c7c"/><path d="M205.6 611.6 L166.1 632.9" stroke="#727272"/><path d="M166.1 632.9 L126.7 654.2" stroke="#ff7c7c"/><path d="M283.6 779.9 L185.9 828.8" stroke="#727272"/><path d="M185.9 828.8 L145.0 804.5" stroke="#727272"/><path d="M145.0 804.5 L104.1 780.3" stroke="#ff7c7c"/><path d="M177.5 827.7 L172.0 870.9" stroke="#727272"/><path d="M172.0 870.9 L166.5 914.2" stroke="#ff7c7c"/><path d="M194.4 829.8 L188.9 873.1" stroke="#727272"/><path d="M188.9 873.1 L183.4 916.3" stroke="#ff7c7c"/></g><g font-family="Liberation Sans,sans-serif" font-size="28" text-anchor="middle" stroke-width="0.9" paint-order="stroke"><text x="783.6" y="663.0" fill="#ff4c4c" stroke="#ff4c4c">OH</text><text x="299.2" y="676.7" fill="#5b66ff" stroke="#5b66ff">NH</text><text x="103.9" y="667.0" fill="#ff4c4c" stroke="#ff4c4c">O</text><text x="80.5" y="776.3" fill="#ff4c4c" stroke="#ff4c4c">HO</text><text x="172.3" y="946.3" fill="#ff4c4c" stroke="#ff4c4c">O</text></g></svg><h4 style="left:-11.03px;width:107.58px;top:10.66px"><a>ZINC156395</a></h4><div class="nm" style="left:-11.03px;width:107.58px;top:24.16px"><abbr>Acetyl Tyrosine</abbr></div></div>
<div class="tile" style="left:519px;top:348px"><svg width="87" height="122" viewBox="0 0 870 1220"><rect x="12.4" y="17.6" width="835.8" height="1181.5" rx="24" fill="#fff" stroke="#e3e3e3" stroke-width="10.0"/><g fill="none" stroke-width="7.5" stroke-linecap="round"><path d="M489.7 653.0 L583.4 619.8" stroke="#727272"/><path d="M583.4 619.8 L661.6 695.9" stroke="#727272"/><path d="M582.5 642.6 L638.8 697.4" stroke="#727272"/><path d="M661.6 695.9 L636.2 799.5" stroke="#727272"/><path d="M636.2 799.5 L538.5 832.7" stroke="#727272"/><path d="M617.0 788.0 L546.7 811.9" stroke="#727272"/><path d="M538.5 832.7 L460.4 756.5" stroke="#727272"/><path d="M460.4 756.5 L489.7 653.0" stroke="#727272"/><path d="M480.8 746.6 L501.9 672.1" stroke="#727272"/><path d="M661.6 695.9 L706.5 690.9" stroke="#727272"/><path d="M706.5 690.9 L751.4 685.8" stroke="#ff7c7c"/><path d="M460.4 756.5 L353.0 776.0" stroke="#727272"/><path d="M353.0 776.0 L270.9 701.8" stroke="#727272"/><path d="M270.9 701.8 L321.3 624.5 L295.8 613.0 Z" fill="#161616" stroke="none"/><path d="M270.9 701.8 L161.6 727.2" stroke="#727272"/><path d="M161.6 727.2 L127.8 695.7" stroke="#727272"/><path d="M127.8 695.7 L94.0 664.3" stroke="#ff7c7c"/><path d="M153.3 725.1 L142.3 767.6" stroke="#727272"/><path d="M142.3 767.6 L131.3 810.1" stroke="#ff7c7c"/><path d="M169.8 729.3 L158.8 771.8" stroke="#727272"/><path d="M158.8 771.8 L147.7 814.4" stroke="#ff7c7c"/></g><g font-family="Liberation Sans,sans-serif" font-size="28" text-anchor="middle" stroke-width="0.9" paint-order="stroke"><text x="782.7" y="692.3" fill="#ff4c4c" stroke="#ff4c4c">OH</text><text x="317.8" y="608.4" fill="#5b66ff" stroke="#5b66ff">NH<tspan font-size="24">2</tspan></text><text x="75.6" y="657.2" fill="#ff4c4c" stroke="#ff4c4c">HO</text><text x="134.2" y="842.7" fill="#ff4c4c" stroke="#ff4c4c">O</text></g></svg><h4 style="left:-11.16px;width:107.58px;top:10.66px"><a>ZINC266964</a></h4><div class="nm" style="left:-11.16px;width:107.58px;top:24.16px"><abbr>Tyr</abbr></div></div>
<div class="tile" style="left:623px;top:348px"><svg width="87" height="122" viewBox="0 0 870 1220"><rect x="11.1" y="17.6" width="835.8" height="1181.5" rx="24" fill="#fff" stroke="#e3e3e3" stroke-width="10.0"/><g fill="none" stroke-width="7.5" stroke-linecap="round"><path d="M488.8 731.1 L505.9 690.5" stroke="#727272"/><path d="M505.9 690.5 L523.1 649.8" stroke="#8b95ff"/><path d="M563.2 632.1 L596.3 634.7" stroke="#8b95ff"/><path d="M596.3 634.7 L629.4 637.3" stroke="#727272"/><path d="M629.4 637.3 L641.2 679.0" stroke="#727272"/><path d="M641.2 679.0 L652.9 720.6" stroke="#8b95ff"/><path d="M616.3 653.6 L626.4 689.4" stroke="#727272"/><path d="M626.4 689.4 L636.6 725.2" stroke="#8b95ff"/><path d="M640.7 752.3 L603.8 775.9" stroke="#8b95ff"/><path d="M603.8 775.9 L566.9 799.5" stroke="#727272"/><path d="M566.9 799.5 L488.8 731.1" stroke="#727272"/><path d="M567.1 777.1 L510.9 727.9" stroke="#727272"/><path d="M488.8 731.1 L379.4 756.5" stroke="#727272"/><path d="M379.4 756.5 L287.6 682.3" stroke="#727272"/><path d="M287.6 682.3 L248.3 692.4" stroke="#727272"/><path d="M248.3 692.4 L209.1 702.6" stroke="#8b95ff"/></g><g font-family="Liberation Sans,sans-serif" font-size="28" text-anchor="middle" stroke-width="0.9" paint-order="stroke"><text x="531.7" y="639.6" fill="#5b66ff" stroke="#5b66ff">NH</text><text x="658.7" y="750.9" fill="#5b66ff" stroke="#5b66ff">N</text><text x="174.3" y="721.6" fill="#5b66ff" stroke="#5b66ff">H<tspan font-size="24">2</tspan>N</text></g></svg><h4 style="left:-11.29px;width:107.58px;top:10.66px"><a>ZINC388081</a></h4><div class="nm" style="left:-11.29px;width:107.58px;top:24.16px"><abbr>Histamine</abbr></div></div>
<div class="tile" style="left:726px;top:348px"><svg width="87" height="122" viewBox="0 0 870 1220"><rect x="19.8" y="17.6" width="835.8" height="1181.5" rx="24" fill="#fff" stroke="#e3e3e3" stroke-width="10.0"/><g fill="none" stroke-width="7.5" stroke-linecap="round"><path d="M497.8 649.1 L599.4 604.1" stroke="#727272"/><path d="M599.4 604.1 L687.3 672.5" stroke="#727272"/><path d="M601.2 627.1 L664.5 676.3" stroke="#727272"/><path d="M687.3 672.5 L669.7 779.9" stroke="#727272"/><path d="M669.7 779.9 L566.2 824.8" stroke="#727272"/><path d="M648.4 770.6 L573.9 803.0" stroke="#727272"/><path d="M566.2 824.8 L478.3 750.6" stroke="#727272"/><path d="M478.3 750.6 L497.8 649.1" stroke="#727272"/><path d="M497.7 739.6 L511.8 666.5" stroke="#727272"/><path d="M478.3 750.6 L365.0 785.8" stroke="#727272"/><path d="M365.0 785.8 L283.0 711.6" stroke="#727272"/><path d="M283.0 711.6 L297.0 671.1" stroke="#727272"/><path d="M297.0 671.1 L311.0 630.5" stroke="#ff7c7c"/><path d="M279.7 703.7 L242.7 719.1" stroke="#727272"/><path d="M242.7 719.1 L205.6 734.6" stroke="#ff7c7c"/><path d="M286.2 719.4 L249.2 734.8" stroke="#727272"/><path d="M249.2 734.8 L212.2 750.3" stroke="#ff7c7c"/></g><g font-family="Liberation Sans,sans-serif" font-size="28" text-anchor="middle" stroke-width="0.9" paint-order="stroke"><text x="318.1" y="620.1" fill="#ff4c4c" stroke="#ff4c4c">OH</text><text x="189.2" y="760.7" fill="#ff4c4c" stroke="#ff4c4c">O</text></g></svg><h4 style="left:-10.42px;width:107.58px;top:10.66px"><a>ZINC388462</a></h4><div class="nm" style="left:-10.42px;width:107.58px;top:24.16px"><abbr>Phenylacetate</abbr></div></div>
<div class="tile" style="left:830px;top:348px"><svg width="87" height="122" viewBox="0 0 870 1220"><rect x="18.5" y="17.6" width="835.8" height="1181.5" rx="24" fill="#fff" stroke="#e3e3e3" stroke-width="10.0"/><g fill="none" stroke-width="7.5" stroke-linecap="round"><path d="M301.7 694.3 L330.8 727.3" stroke="#8b95ff"/><path d="M330.8 727.3 L359.9 760.4" stroke="#727272"/><path d="M359.9 760.4 L301.3 858.0" stroke="#727272"/><path d="M301.3 858.0 L190.0 828.8" stroke="#727272"/><path d="M190.0 828.8 L178.3 717.4" stroke="#727272"/><path d="M178.3 717.4 L222.9 701.5" stroke="#727272"/><path d="M222.9 701.5 L267.6 685.5" stroke="#8b95ff"/><path d="M471.2 750.6 L516.2 656.9" stroke="#727272"/><path d="M516.2 656.9 L559.2 653.7" stroke="#727272"/><path d="M559.2 653.7 L602.3 650.6" stroke="#8b95ff"/><path d="M529.5 673.0 L566.5 670.3" stroke="#727272"/><path d="M566.5 670.3 L603.5 667.6" stroke="#8b95ff"/><path d="M636.3 666.0 L662.2 700.5" stroke="#8b95ff"/><path d="M662.2 700.5 L688.0 735.0" stroke="#727272"/><path d="M688.0 735.0 L639.2 834.6" stroke="#727272"/><path d="M665.9 741.5 L630.8 813.2" stroke="#727272"/><path d="M639.2 834.6 L529.8 838.5" stroke="#727272"/><path d="M529.8 838.5 L471.2 750.6" stroke="#727272"/><path d="M535.8 816.8 L493.6 753.5" stroke="#727272"/><path d="M291.6 657.6 L299.4 616.2" stroke="#8b95ff"/><path d="M299.4 616.2 L307.2 574.8" stroke="#727272"/><path d="M372.4 760.9 L372.2 757.8" stroke="#2a2a2a" stroke-width="6.2" stroke-linecap="butt"/><path d="M384.9 761.3 L384.4 755.1" stroke="#2a2a2a" stroke-width="6.2" stroke-linecap="butt"/><path d="M397.4 761.8 L396.6 752.5" stroke="#2a2a2a" stroke-width="6.2" stroke-linecap="butt"/><path d="M409.9 762.2 L408.9 749.9" stroke="#2a2a2a" stroke-width="6.2" stroke-linecap="butt"/><path d="M422.5 762.7 L421.1 747.2" stroke="#2a2a2a" stroke-width="6.2" stroke-linecap="butt"/><path d="M435.0 763.2 L433.3 744.6" stroke="#2a2a2a" stroke-width="6.2" stroke-linecap="butt"/><path d="M447.5 763.6 L445.6 741.9" stroke="#2a2a2a" stroke-width="6.2" stroke-linecap="butt"/><path d="M460.0 764.1 L457.8 739.3" stroke="#2a2a2a" stroke-width="6.2" stroke-linecap="butt"/><path d="M472.5 764.6 L470.0 736.7" stroke="#2a2a2a" stroke-width="6.2" stroke-linecap="butt"/></g><g font-family="Liberation Sans,sans-serif" font-size="28" text-anchor="middle" stroke-width="0.9" paint-order="stroke"><text x="287.7" y="688.4" fill="#5b66ff" stroke="#5b66ff">N</text><text x="623.6" y="659.1" fill="#5b66ff" stroke="#5b66ff">N</text></g></svg><h4 style="left:-10.55px;width:107.58px;top:10.66px"><a>ZINC391812</a></h4><div class="nm" style="left:-10.55px;width:107.58px;top:24.16px"><abbr>Nicotine</abbr></div></div>
<div class="tile" style="left:934px;top:348px"><svg width="87" height="122" viewBox="0 0 870 1220"><rect x="17.2" y="17.6" width="835.8" height="1181.5" rx="24" fill="#fff" stroke="#e3e3e3" stroke-width="10.0"/><g fill="none" stroke-width="7.5" stroke-linecap="round"><path d="M522.3 655.6 L519.7 652.6" stroke="#2a2a2a" stroke-width="6.2" stroke-linecap="butt"/><path d="M533.3 648.5 L528.0 642.5" stroke="#2a2a2a" stroke-width="6.2" stroke-linecap="butt"/><path d="M544.3 641.4 L536.4 632.5" stroke="#2a2a2a" stroke-width="6.2" stroke-linecap="butt"/><path d="M555.3 634.3 L544.7 622.4" stroke="#2a2a2a" stroke-width="6.2" stroke-linecap="butt"/><path d="M566.3 627.2 L553.0 612.3" stroke="#2a2a2a" stroke-width="6.2" stroke-linecap="butt"/><path d="M577.3 620.1 L561.4 602.2" stroke="#2a2a2a" stroke-width="6.2" stroke-linecap="butt"/><path d="M588.3 613.0 L569.7 592.1" stroke="#2a2a2a" stroke-width="6.2" stroke-linecap="butt"/><path d="M511.3 662.7 L403.9 639.3" stroke="#727272"/><path d="M403.9 639.3 L321.9 715.5" stroke="#727272"/><path d="M321.9 715.5 L278.7 708.3" stroke="#727272"/><path d="M278.7 708.3 L235.5 701.1" stroke="#ff7c7c"/><path d="M313.7 717.9 L327.3 762.5" stroke="#727272"/><path d="M327.3 762.5 L340.8 807.1" stroke="#ff7c7c"/><path d="M330.0 713.0 L343.5 757.6" stroke="#727272"/><path d="M343.5 757.6 L357.1 802.2" stroke="#ff7c7c"/><path d="M511.3 662.7 L536.7 770.2" stroke="#727272"/><path d="M534.9 778.5 L577.2 787.9" stroke="#727272"/><path d="M577.2 787.9 L619.5 797.3" stroke="#ff7c7c"/><path d="M538.6 761.9 L580.9 771.3" stroke="#727272"/><path d="M580.9 771.3 L623.2 780.7" stroke="#ff7c7c"/><path d="M536.7 770.2 L503.9 800.6" stroke="#727272"/><path d="M503.9 800.6 L471.2 831.1" stroke="#ff7c7c"/></g><g font-family="Liberation Sans,sans-serif" font-size="28" text-anchor="middle" stroke-width="0.9" paint-order="stroke"><text x="599.2" y="594.7" fill="#5b66ff" stroke="#5b66ff">NH<tspan font-size="24">2</tspan></text><text x="204.7" y="706.0" fill="#ff4c4c" stroke="#ff4c4c">HO</text><text x="355.1" y="834.9" fill="#ff4c4c" stroke="#ff4c4c">O</text><text x="642.2" y="803.7" fill="#ff4c4c" stroke="#ff4c4c">O</text><text x="452.7" y="858.4" fill="#ff4c4c" stroke="#ff4c4c">HO</text></g></svg><h4 style="left:-10.68px;width:107.58px;top:10.66px"><a>ZINC895032</a></h4><div class="nm" style="left:-10.68px;width:107.58px;top:24.16px"><abbr>Aspartate</abbr></div></div>
<div class="tile" style="left:-1px;top:480px"><svg width="87" height="122" viewBox="0 0 870 1220"><rect x="18.9" y="17.6" width="835.8" height="1181.5" rx="24" fill="#fff" stroke="#e3e3e3" stroke-width="10.0"/><g fill="none" stroke-width="7.5" stroke-linecap="round"><path d="M435.8 715.5 L371.3 623.7" stroke="#727272"/><path d="M371.3 623.7 L330.5 623.7" stroke="#727272"/><path d="M330.5 623.7 L289.8 623.7" stroke="#ff7c7c"/><path d="M435.8 715.5 L551.0 715.5" stroke="#727272"/><path d="M551.0 715.5 L576.5 679.1" stroke="#727272"/><path d="M576.5 679.1 L602.1 642.8" stroke="#ff7c7c"/><path d="M435.8 715.5 L409.8 755.6" stroke="#727272"/><path d="M409.8 755.6 L383.9 795.7" stroke="#ff7c7c"/></g><g font-family="Liberation Sans,sans-serif" font-size="28" text-anchor="middle" stroke-width="0.9" paint-order="stroke"><text x="258.0" y="633.8" fill="#ff4c4c" stroke="#ff4c4c">HO</text><text x="615.5" y="633.8" fill="#ff4c4c" stroke="#ff4c4c">OH</text><text x="371.3" y="825.2" fill="#ff4c4c" stroke="#ff4c4c">HO</text></g></svg><h4 style="left:-10.51px;width:107.58px;top:10.66px"><a>ZINC895048</a></h4><div class="nm" style="left:-10.51px;width:107.58px;top:24.16px"><abbr>Ifp</abbr></div></div>
<div class="tile" style="left:103px;top:480px"><svg width="87" height="122" viewBox="0 0 870 1220"><rect x="17.6" y="17.6" width="835.8" height="1181.5" rx="24" fill="#fff" stroke="#e3e3e3" stroke-width="10.0"/><g fill="none" stroke-width="7.5" stroke-linecap="round"><path d="M386.0 779.9 L413.5 819.2" stroke="#727272"/><path d="M413.5 819.2 L441.0 858.5" stroke="#ff7c7c"/><path d="M386.0 779.9 L331.3 682.3" stroke="#727272"/><path d="M331.3 682.3 L395.8 590.5" stroke="#727272"/><path d="M403.2 586.3 L382.0 548.6" stroke="#727272"/><path d="M382.0 548.6 L360.8 511.0" stroke="#ff7c7c"/><path d="M388.4 594.6 L367.2 557.0" stroke="#727272"/><path d="M367.2 557.0 L346.0 519.3" stroke="#ff7c7c"/><path d="M395.8 590.5 L440.5 591.9" stroke="#727272"/><path d="M440.5 591.9 L485.2 593.4" stroke="#ff7c7c"/><path d="M386.0 779.9 L294.2 832.7" stroke="#727272"/><path d="M294.2 832.7 L251.9 810.0" stroke="#727272"/><path d="M251.9 810.0 L209.5 787.3" stroke="#ff7c7c"/><path d="M285.7 832.2 L283.4 876.4" stroke="#727272"/><path d="M283.4 876.4 L281.0 920.5" stroke="#ff7c7c"/><path d="M302.7 833.1 L300.3 877.3" stroke="#727272"/><path d="M300.3 877.3 L298.0 921.4" stroke="#ff7c7c"/><path d="M386.0 779.9 L483.7 731.1" stroke="#727272"/><path d="M483.7 731.1 L577.4 785.8" stroke="#727272"/><path d="M581.3 793.3 L620.7 772.8" stroke="#727272"/><path d="M620.7 772.8 L660.1 752.4" stroke="#ff7c7c"/><path d="M573.5 778.2 L612.9 757.8" stroke="#727272"/><path d="M612.9 757.8 L652.3 737.3" stroke="#ff7c7c"/><path d="M577.4 785.8 L573.4 833.9" stroke="#727272"/><path d="M573.4 833.9 L569.4 881.9" stroke="#ff7c7c"/></g><g font-family="Liberation Sans,sans-serif" font-size="28" text-anchor="middle" stroke-width="0.9" paint-order="stroke"><text x="454.4" y="887.7" fill="#ff4c4c" stroke="#ff4c4c">OH</text><text x="343.0" y="506.8" fill="#ff4c4c" stroke="#ff4c4c">O</text><text x="516.9" y="604.5" fill="#ff4c4c" stroke="#ff4c4c">OH</text><text x="184.8" y="784.1" fill="#ff4c4c" stroke="#ff4c4c">HO</text><text x="288.4" y="952.1" fill="#ff4c4c" stroke="#ff4c4c">O</text><text x="675.1" y="745.1" fill="#ff4c4c" stroke="#ff4c4c">O</text><text x="567.7" y="913.0" fill="#ff4c4c" stroke="#ff4c4c">HO</text></g></svg><h4 style="left:-10.64px;width:107.58px;top:10.66px"><a>ZINC895081</a></h4><div class="nm" style="left:-10.64px;width:107.58px;top:24.16px"><abbr>Citrate</abbr></div></div>
<div class="tile" style="left:207px;top:480px"><svg width="87" height="122" viewBox="0 0 870 1220"><rect x="16.3" y="17.6" width="835.8" height="1181.5" rx="24" fill="#fff" stroke="#e3e3e3" stroke-width="10.0"/><g fill="none" stroke-width="7.5" stroke-linecap="round"><path d="M433.9 692.0 L441.8 648.8" stroke="#727272"/><path d="M441.8 648.8 L449.6 605.6" stroke="#8b95ff"/><path d="M422.3 696.5 L423.8 699.3" stroke="#2a2a2a" stroke-width="6.2" stroke-linecap="butt"/><path d="M410.7 701.0 L413.7 706.5" stroke="#2a2a2a" stroke-width="6.2" stroke-linecap="butt"/><path d="M399.1 705.5 L403.6 713.7" stroke="#2a2a2a" stroke-width="6.2" stroke-linecap="butt"/><path d="M387.5 710.0 L393.5 720.9" stroke="#2a2a2a" stroke-width="6.2" stroke-linecap="butt"/><path d="M376.0 714.5 L383.3 728.2" stroke="#2a2a2a" stroke-width="6.2" stroke-linecap="butt"/><path d="M364.4 719.0 L373.2 735.4" stroke="#2a2a2a" stroke-width="6.2" stroke-linecap="butt"/><path d="M352.8 723.5 L363.1 742.6" stroke="#2a2a2a" stroke-width="6.2" stroke-linecap="butt"/><path d="M341.2 728.0 L353.0 749.9" stroke="#2a2a2a" stroke-width="6.2" stroke-linecap="butt"/><path d="M329.6 732.4 L342.9 757.1" stroke="#2a2a2a" stroke-width="6.2" stroke-linecap="butt"/><path d="M336.2 744.8 L242.5 692.0" stroke="#727272"/><path d="M336.2 744.8 L336.2 854.1" stroke="#727272"/><path d="M433.9 692.0 L531.6 744.8" stroke="#727272"/><path d="M531.6 744.8 L571.6 724.7" stroke="#727272"/><path d="M571.6 724.7 L611.7 704.7" stroke="#ff7c7c"/><path d="M523.1 744.8 L523.1 788.9" stroke="#727272"/><path d="M523.1 788.9 L523.1 833.1" stroke="#ff7c7c"/><path d="M540.1 744.8 L540.1 788.9" stroke="#727272"/><path d="M540.1 788.9 L540.1 833.1" stroke="#ff7c7c"/></g><g font-family="Liberation Sans,sans-serif" font-size="28" text-anchor="middle" stroke-width="0.9" paint-order="stroke"><text x="453.4" y="594.7" fill="#5b66ff" stroke="#5b66ff">NH<tspan font-size="24">2</tspan></text><text x="637.0" y="702.1" fill="#ff4c4c" stroke="#ff4c4c">OH</text><text x="531.6" y="864.2" fill="#ff4c4c" stroke="#ff4c4c">O</text></g></svg><h4 style="left:-10.77px;width:107.58px;top:10.66px"><a>ZINC895099</a></h4><div class="nm" style="left:-10.77px;width:107.58px;top:24.16px"><abbr>Valine</abbr></div></div>
<div class="tile" style="left:311px;top:480px"><svg width="87" height="122" viewBox="0 0 870 1220"><rect x="15.0" y="17.6" width="835.8" height="1181.5" rx="24" fill="#fff" stroke="#e3e3e3" stroke-width="10.0"/><g fill="none" stroke-width="7.5" stroke-linecap="round"><path d="M433.0 744.8 L431.7 833.2 L459.4 829.2 Z" fill="#161616" stroke="none"/><path d="M433.0 744.8 L339.2 692.0" stroke="#727272"/><path d="M339.2 692.0 L341.6 646.9" stroke="#727272"/><path d="M341.6 646.9 L344.0 601.8" stroke="#ff7c7c"/><path d="M339.2 692.0 L236.8 732.5 L250.3 757.0 Z" fill="#161616" stroke="none"/><path d="M433.0 744.8 L530.6 692.0" stroke="#727272"/><path d="M539.1 692.0 L539.1 646.9" stroke="#727272"/><path d="M539.1 646.9 L539.1 601.8" stroke="#ff7c7c"/><path d="M522.1 692.0 L522.1 646.9" stroke="#727272"/><path d="M522.1 646.9 L522.1 601.8" stroke="#ff7c7c"/><path d="M530.6 692.0 L569.8 712.0" stroke="#727272"/><path d="M569.8 712.0 L609.0 731.9" stroke="#ff7c7c"/></g><g font-family="Liberation Sans,sans-serif" font-size="28" text-anchor="middle" stroke-width="0.9" paint-order="stroke"><text x="448.6" y="862.3" fill="#5b66ff" stroke="#5b66ff">NH<tspan font-size="24">2</tspan></text><text x="345.1" y="590.8" fill="#ff4c4c" stroke="#ff4c4c">OH</text><text x="530.6" y="590.8" fill="#ff4c4c" stroke="#ff4c4c">O</text><text x="634.1" y="754.8" fill="#ff4c4c" stroke="#ff4c4c">OH</text></g></svg><h4 style="left:-10.90px;width:107.58px;top:10.66px"><a>ZINC895103</a></h4><div class="nm" style="left:-10.90px;width:107.58px;top:24.16px"><abbr>Threonin</abbr></div></div>
<div class="tile" style="left:415px;top:480px"><svg width="87" height="122" viewBox="0 0 870 1220"><rect x="13.7" y="17.6" width="835.8" height="1181.5" rx="24" fill="#fff" stroke="#e3e3e3" stroke-width="10.0"/><g fill="none" stroke-width="7.5" stroke-linecap="round"><path d="M348.0 692.0 L361.7 604.1" stroke="#727272"/><path d="M361.7 604.1 L394.6 592.5" stroke="#727272"/><path d="M394.6 592.5 L427.5 580.9" stroke="#8b95ff"/><path d="M474.3 587.9 L494.2 605.8" stroke="#8b95ff"/><path d="M494.2 605.8 L514.1 623.7" stroke="#727272"/><path d="M498.4 717.4 L475.4 728.0" stroke="#727272"/><path d="M475.4 728.0 L452.3 738.6" stroke="#8b95ff"/><path d="M405.1 734.8 L376.6 713.4" stroke="#8b95ff"/><path d="M376.6 713.4 L348.0 692.0" stroke="#727272"/><path d="M514.1 623.7 L550.3 613.2" stroke="#727272"/><path d="M550.3 613.2 L586.5 602.8" stroke="#8b95ff"/><path d="M635.2 611.0 L657.6 630.0" stroke="#8b95ff"/><path d="M657.6 630.0 L680.1 649.1" stroke="#727272"/><path d="M680.1 649.1 L672.5 684.6" stroke="#727272"/><path d="M672.5 684.6 L664.9 720.2" stroke="#8b95ff"/><path d="M661.3 655.5 L654.8 686.1" stroke="#727272"/><path d="M654.8 686.1 L648.3 716.7" stroke="#8b95ff"/><path d="M640.6 748.4 L606.6 761.2" stroke="#8b95ff"/><path d="M606.6 761.2 L572.7 774.1" stroke="#727272"/><path d="M572.7 774.1 L498.4 717.4" stroke="#727272"/><path d="M498.4 717.4 L514.1 623.7" stroke="#727272"/><path d="M517.4 707.1 L528.6 639.6" stroke="#727272"/><path d="M564.2 773.2 L560.4 809.6" stroke="#727272"/><path d="M560.4 809.6 L556.6 846.0" stroke="#ff7c7c"/><path d="M581.1 774.9 L577.3 811.3" stroke="#727272"/><path d="M577.3 811.3 L573.5 847.7" stroke="#ff7c7c"/><path d="M680.1 649.1 L712.3 638.7" stroke="#727272"/><path d="M712.3 638.7 L744.5 628.4" stroke="#8b95ff"/><path d="M348.0 692.0 L260.2 727.2" stroke="#727272"/><path d="M260.2 727.2 L231.4 795.2 L258.8 801.0 Z" fill="#161616" stroke="none"/><path d="M260.2 727.2 L182.0 662.7" stroke="#727272"/><path d="M182.0 662.7 L195.4 630.9" stroke="#727272"/><path d="M195.4 630.9 L208.7 599.1" stroke="#ff7c7c"/><path d="M182.0 662.7 L94.7 683.0 L105.3 708.9 Z" fill="#161616" stroke="none"/><path d="M352.0 679.8 L348.0 679.2" stroke="#2a2a2a" stroke-width="6.2" stroke-linecap="butt"/><path d="M355.9 667.5 L348.0 666.3" stroke="#2a2a2a" stroke-width="6.2" stroke-linecap="butt"/><path d="M359.8 655.3 L348.0 653.4" stroke="#2a2a2a" stroke-width="6.2" stroke-linecap="butt"/><path d="M363.8 643.0 L348.0 640.6" stroke="#2a2a2a" stroke-width="6.2" stroke-linecap="butt"/><path d="M367.7 630.8 L347.9 627.7" stroke="#2a2a2a" stroke-width="6.2" stroke-linecap="butt"/><path d="M371.6 618.5 L347.9 614.9" stroke="#2a2a2a" stroke-width="6.2" stroke-linecap="butt"/><path d="M375.6 606.3 L347.9 602.0" stroke="#2a2a2a" stroke-width="6.2" stroke-linecap="butt"/></g><g font-family="Liberation Sans,sans-serif" font-size="28" text-anchor="middle" stroke-width="0.9" paint-order="stroke"><text x="455.5" y="581.0" fill="#5b66ff" stroke="#5b66ff">NH</text><text x="426.2" y="760.7" fill="#5b66ff" stroke="#5b66ff">NH</text><text x="615.6" y="604.5" fill="#5b66ff" stroke="#5b66ff">NH</text><text x="660.5" y="750.9" fill="#5b66ff" stroke="#5b66ff">N</text><text x="562.9" y="877.9" fill="#ff4c4c" stroke="#ff4c4c">O</text><text x="777.7" y="627.9" fill="#5b66ff" stroke="#5b66ff">NH<tspan font-size="24">2</tspan></text><text x="240.6" y="829.1" fill="#ff4c4c" stroke="#ff4c4c">HO</text><text x="217.2" y="588.8" fill="#ff4c4c" stroke="#ff4c4c">OH</text></g></svg><h4 style="left:-11.03px;width:107.58px;top:10.66px"><a>ZINC895154</a></h4><div class="nm" style="left:-11.03px;width:107.58px;top:24.16px"><abbr>Kuvan</abbr></div></div>
<div class="tile" style="left:519px;top:480px"><svg width="87" height="122" viewBox="0 0 870 1220"><rect x="12.4" y="17.6" width="835.8" height="1181.5" rx="24" fill="#fff" stroke="#e3e3e3" stroke-width="10.0"/><g fill="none" stroke-width="7.5" stroke-linecap="round"><path d="M485.8 623.7 L587.3 590.5" stroke="#727272"/><path d="M587.3 590.5 L661.6 662.7" stroke="#727272"/><path d="M585.9 612.8 L639.3 664.8" stroke="#727272"/><path d="M661.6 662.7 L642.0 770.2" stroke="#727272"/><path d="M642.0 770.2 L538.5 803.4" stroke="#727272"/><path d="M622.3 758.6 L547.8 782.5" stroke="#727272"/><path d="M538.5 803.4 L460.4 731.1" stroke="#727272"/><path d="M460.4 731.1 L485.8 623.7" stroke="#727272"/><path d="M480.5 720.0 L498.8 642.6" stroke="#727272"/><path d="M661.6 662.7 L702.5 652.0" stroke="#727272"/><path d="M702.5 652.0 L743.4 641.2" stroke="#ff7c7c"/><path d="M642.0 770.2 L678.2 800.9" stroke="#727272"/><path d="M678.2 800.9 L714.3 831.7" stroke="#ff7c7c"/><path d="M460.4 731.1 L353.0 766.2" stroke="#727272"/><path d="M353.0 766.2 L265.1 695.9" stroke="#727272"/><path d="M265.1 695.9 L317.4 614.8 L291.9 603.2 Z" fill="#161616" stroke="none"/><path d="M265.1 695.9 L157.7 727.2" stroke="#727272"/><path d="M157.7 727.2 L126.0 698.6" stroke="#727272"/><path d="M126.0 698.6 L94.4 670.0" stroke="#ff7c7c"/><path d="M149.2 726.0 L142.9 769.2" stroke="#727272"/><path d="M142.9 769.2 L136.7 812.5" stroke="#ff7c7c"/><path d="M166.1 728.4 L159.8 771.7" stroke="#727272"/><path d="M159.8 771.7 L153.5 815.0" stroke="#ff7c7c"/></g><g font-family="Liberation Sans,sans-serif" font-size="28" text-anchor="middle" stroke-width="0.9" paint-order="stroke"><text x="772.9" y="643.5" fill="#ff4c4c" stroke="#ff4c4c">OH</text><text x="733.8" y="858.4" fill="#ff4c4c" stroke="#ff4c4c">OH</text><text x="313.9" y="598.6" fill="#5b66ff" stroke="#5b66ff">NH<tspan font-size="24">2</tspan></text><text x="75.6" y="663.0" fill="#ff4c4c" stroke="#ff4c4c">HO</text><text x="142.0" y="844.7" fill="#ff4c4c" stroke="#ff4c4c">O</text></g></svg><h4 style="left:-11.16px;width:107.58px;top:10.66px"><a>ZINC895199</a></h4><div class="nm" style="left:-11.16px;width:107.58px;top:24.16px"><abbr>Dopal</abbr></div></div>
<div class="tile" style="left:623px;top:480px"><svg width="87" height="122" viewBox="0 0 870 1220"><rect x="11.1" y="17.6" width="835.8" height="1181.5" rx="24" fill="#fff" stroke="#e3e3e3" stroke-width="10.0"/><g fill="none" stroke-width="7.5" stroke-linecap="round"><path d="M443.8 643.2 L547.3 610.0" stroke="#727272"/><path d="M547.3 610.0 L625.5 686.2" stroke="#727272"/><path d="M546.4 632.8 L602.7 687.7" stroke="#727272"/><path d="M625.5 686.2 L600.1 789.7" stroke="#727272"/><path d="M600.1 789.7 L492.7 822.9" stroke="#727272"/><path d="M580.0 778.1 L502.7 802.0" stroke="#727272"/><path d="M492.7 822.9 L414.5 744.8" stroke="#727272"/><path d="M414.5 744.8 L443.8 643.2" stroke="#727272"/><path d="M435.0 735.3 L456.1 662.1" stroke="#727272"/><path d="M414.5 744.8 L301.2 764.3" stroke="#727272"/><path d="M301.2 764.3 L267.6 733.7" stroke="#727272"/><path d="M267.6 733.7 L234.0 703.2" stroke="#ff7c7c"/></g><g font-family="Liberation Sans,sans-serif" font-size="28" text-anchor="middle" stroke-width="0.9" paint-order="stroke"><text x="215.3" y="696.3" fill="#ff4c4c" stroke="#ff4c4c">HO</text></g></svg><h4 style="left:-11.29px;width:107.58px;top:10.66px"><a>ZINC895302</a></h4><div class="nm" style="left:-11.29px;width:107.58px;top:24.16px"><abbr>Mbn</abbr></div></div>
<div class="tile" style="left:726px;top:480px"><svg width="87" height="122" viewBox="0 0 870 1220"><rect x="19.8" y="17.6" width="835.8" height="1181.5" rx="24" fill="#fff" stroke="#e3e3e3" stroke-width="10.0"/><g fill="none" stroke-width="7.5" stroke-linecap="round"><path d="M386.5 746.7 L390.4 702.6" stroke="#727272"/><path d="M390.4 702.6 L394.4 658.4" stroke="#ff7c7c"/><path d="M374.9 751.2 L376.4 753.9" stroke="#2a2a2a" stroke-width="6.2" stroke-linecap="butt"/><path d="M363.3 755.7 L366.3 761.2" stroke="#2a2a2a" stroke-width="6.2" stroke-linecap="butt"/><path d="M351.7 760.2 L356.1 768.4" stroke="#2a2a2a" stroke-width="6.2" stroke-linecap="butt"/><path d="M340.1 764.7 L346.0 775.6" stroke="#2a2a2a" stroke-width="6.2" stroke-linecap="butt"/><path d="M328.5 769.2 L335.9 782.9" stroke="#2a2a2a" stroke-width="6.2" stroke-linecap="butt"/><path d="M316.9 773.7 L325.8 790.1" stroke="#2a2a2a" stroke-width="6.2" stroke-linecap="butt"/><path d="M305.4 778.2 L315.7 797.3" stroke="#2a2a2a" stroke-width="6.2" stroke-linecap="butt"/><path d="M293.8 782.6 L305.6 804.5" stroke="#2a2a2a" stroke-width="6.2" stroke-linecap="butt"/><path d="M282.2 787.1 L295.5 811.8" stroke="#2a2a2a" stroke-width="6.2" stroke-linecap="butt"/><path d="M386.5 746.7 L484.1 799.5" stroke="#727272"/><path d="M484.1 799.5 L522.4 779.6" stroke="#727272"/><path d="M522.4 779.6 L560.7 759.7" stroke="#ff7c7c"/></g><g font-family="Liberation Sans,sans-serif" font-size="28" text-anchor="middle" stroke-width="0.9" paint-order="stroke"><text x="396.2" y="647.4" fill="#ff4c4c" stroke="#ff4c4c">OH</text><text x="585.7" y="756.8" fill="#ff4c4c" stroke="#ff4c4c">OH</text></g></svg><h4 style="left:-10.42px;width:107.58px;top:10.66px"><a>ZINC895316</a></h4><div class="nm" style="left:-10.42px;width:107.58px;top:24.16px"><abbr>Glycol</abbr></div></div>
<div class="tile" style="left:830px;top:480px"><svg width="87" height="122" viewBox="0 0 870 1220"><rect x="18.5" y="17.6" width="835.8" height="1181.5" rx="24" fill="#fff" stroke="#e3e3e3" stroke-width="10.0"/><g fill="none" stroke-width="7.5" stroke-linecap="round"><path d="M389.2 746.7 L393.2 702.6" stroke="#727272"/><path d="M393.2 702.6 L397.1 658.4" stroke="#ff7c7c"/><path d="M389.2 746.7 L284.9 787.1 L298.2 811.8 Z" fill="#161616" stroke="none"/><path d="M389.2 746.7 L486.9 799.5" stroke="#727272"/><path d="M486.9 799.5 L525.2 779.6" stroke="#727272"/><path d="M525.2 779.6 L563.4 759.7" stroke="#ff7c7c"/></g><g font-family="Liberation Sans,sans-serif" font-size="28" text-anchor="middle" stroke-width="0.9" paint-order="stroke"><text x="399.0" y="647.4" fill="#ff4c4c" stroke="#ff4c4c">OH</text><text x="588.4" y="756.8" fill="#ff4c4c" stroke="#ff4c4c">OH</text></g></svg><h4 style="left:-10.55px;width:107.58px;top:10.66px"><a>ZINC895318</a></h4><div class="nm" style="left:-10.55px;width:107.58px;top:24.16px"><abbr>Glycol</abbr></div></div>
<div class="tile" style="left:934px;top:480px"><svg width="87" height="122" viewBox="0 0 870 1220"><rect x="17.2" y="17.6" width="835.8" height="1181.5" rx="24" fill="#fff" stroke="#e3e3e3" stroke-width="10.0"/><g fill="none" stroke-width="7.5" stroke-linecap="round"><path d="M439.1 715.5 L374.6 629.5" stroke="#727272"/><path d="M374.6 629.5 L263.3 662.7" stroke="#727272"/><path d="M263.3 662.7 L263.3 770.2" stroke="#727272"/><path d="M263.3 770.2 L309.6 785.1" stroke="#727272"/><path d="M309.6 785.1 L355.8 800.0" stroke="#8b95ff"/><path d="M395.8 789.6 L417.5 752.5" stroke="#8b95ff"/><path d="M417.5 752.5 L439.1 715.5" stroke="#727272"/><path d="M439.1 715.5 L550.4 729.5 L550.4 701.5 Z" fill="#161616" stroke="none"/><path d="M557.9 719.5 L577.3 682.9" stroke="#727272"/><path d="M577.3 682.9 L596.8 646.3" stroke="#ff7c7c"/><path d="M542.9 711.5 L562.3 674.9" stroke="#727272"/><path d="M562.3 674.9 L581.8 638.3" stroke="#ff7c7c"/><path d="M550.4 715.5 L574.1 757.4" stroke="#727272"/><path d="M574.1 757.4 L597.8 799.3" stroke="#ff7c7c"/></g><g font-family="Liberation Sans,sans-serif" font-size="28" text-anchor="middle" stroke-width="0.9" paint-order="stroke"><text x="384.4" y="819.3" fill="#5b66ff" stroke="#5b66ff">NH</text><text x="599.2" y="633.8" fill="#ff4c4c" stroke="#ff4c4c">O</text><text x="609.0" y="829.1" fill="#ff4c4c" stroke="#ff4c4c">OH</text></g></svg><h4 style="left:-10.68px;width:107.58px;top:10.66px"><a>ZINC895360</a></h4><div class="nm" style="left:-10.68px;width:107.58px;top:24.16px"><abbr>Proline</abbr></div></div>
</div>
</body></html>
